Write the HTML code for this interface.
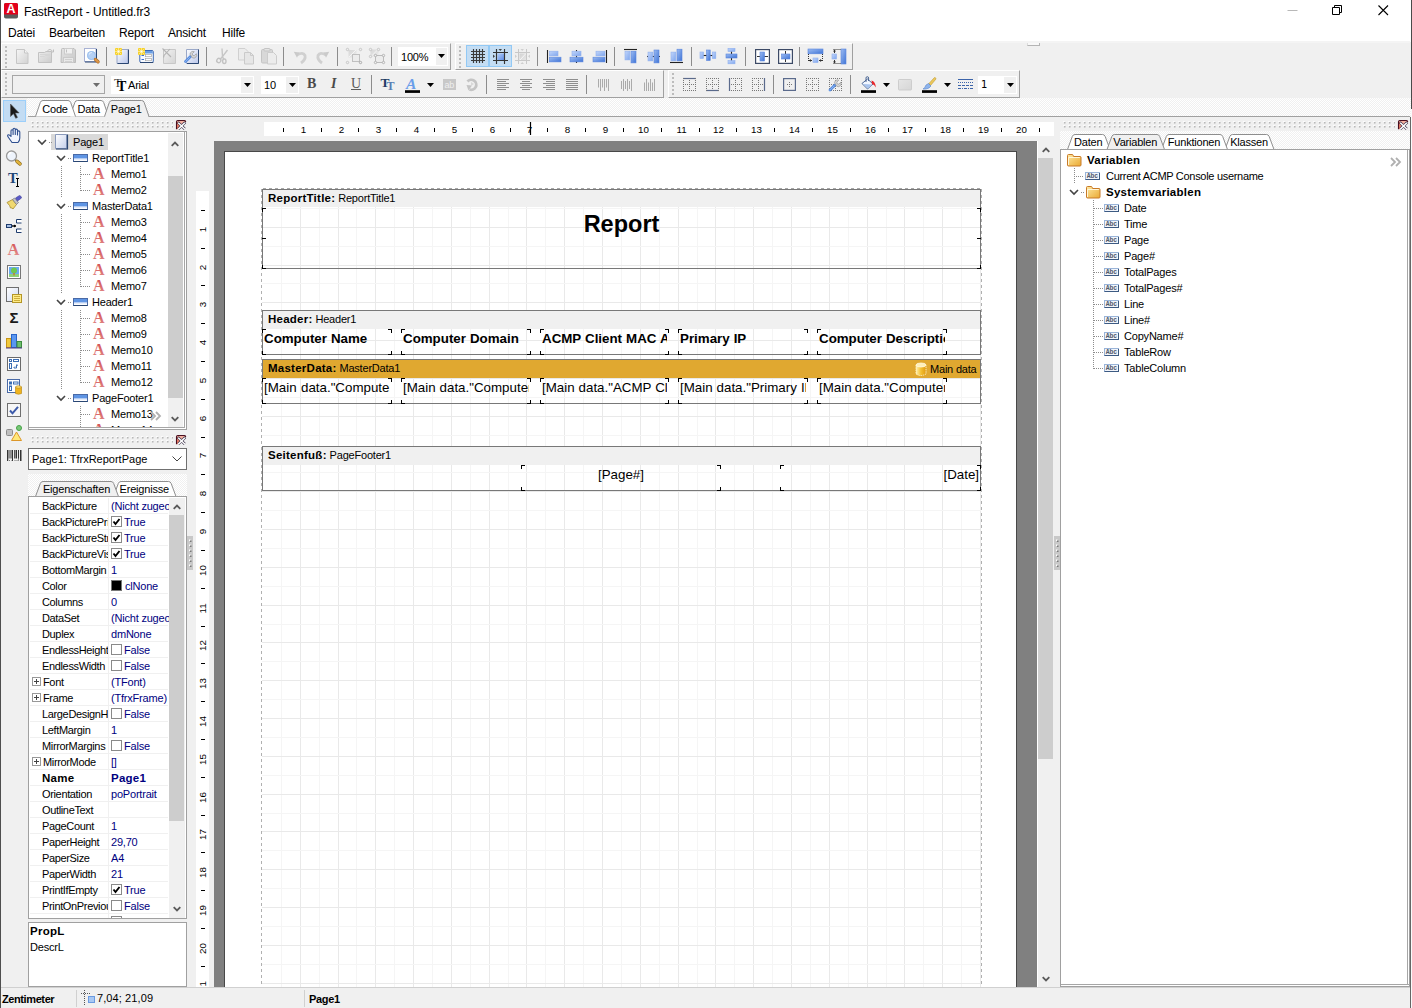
<!DOCTYPE html><html><head><meta charset="utf-8"><title>FastReport - Untitled.fr3</title><style>
*{box-sizing:border-box;margin:0;padding:0}
html,body{width:1412px;height:1008px;overflow:hidden;background:#f0f0f0}
body{font-family:"Liberation Sans",sans-serif;font-size:11px;color:#000;position:relative;letter-spacing:-0.2px}
.a{position:absolute}
.t{position:absolute;white-space:nowrap;line-height:14px;height:14px}
.b{font-weight:bold;font-size:11.5px;letter-spacing:0.25px}
.nv{color:#000080}
svg{position:absolute;overflow:visible}
.grip{position:absolute;height:8px;background-image:linear-gradient(90deg,#b4b4b4 0 2px,transparent 2px),linear-gradient(90deg,#fff 0 2px,transparent 2px);background-size:5px 2px,5px 2px;background-repeat:repeat-x;background-position:0 1px,-1px 0;}
.tbar{position:absolute;border-right:1px solid #a0a0a0;border-bottom:1px solid #a0a0a0;border-top:1px solid #fff;border-left:1px solid #fff}
.sep{position:absolute;width:1px;background:#8c8c8c}
.vg{position:absolute;width:3px;background-image:linear-gradient(135deg,#fff 0 35%,#b4b4b4 35% 100%);background-size:2px 2px;background-repeat:repeat-y;background-size:2px 4px;background-image:linear-gradient(180deg,#bcbcbc 0 2px,transparent 2px 4px);width:2px}
.mm{position:absolute}
.mm i{position:absolute;width:4px;height:4px;border:0 solid #000}
.mm i.tl{left:0;top:0;border-left-width:1px;border-top-width:1px}
.mm i.tr{right:0;top:0;border-right-width:1px;border-top-width:1px}
.mm i.bl{left:0;bottom:0;border-left-width:1px;border-bottom-width:1px}
.mm i.br{right:0;bottom:0;border-right-width:1px;border-bottom-width:1px}
.mt{position:absolute;left:2px;right:2px;top:1.5px;overflow:hidden;white-space:nowrap;font-size:13.33px;line-height:16px;height:18px;letter-spacing:0;word-spacing:0.3px}
.hatch{background-image:conic-gradient(#fff 25%,#f0f0f0 0 50%,#fff 0 75%,#f0f0f0 0);background-size:2px 2px}
.cb{position:absolute;width:11px;height:11px;border:1px solid #8a8a8a;background:#fff}
</style></head><body>
<div class="a" style="left:0px;top:0px;width:1412px;height:42px;background:#fff"></div>
<svg style="left:4px;top:3px" width="15" height="16" viewBox="0 0 15 16"><rect x="0" y="0" width="14" height="15.500" rx="1.800" fill="#5c5c5c"/><path d="M0 1.800Q0 0 1.800 0H12.200Q14 0 14 1.800V11.500H0Z" fill="#e2001a"/><text x="7" y="10.400" text-anchor="middle" font-family="Liberation Sans,sans-serif" font-weight="bold" font-size="12.500" fill="#fff" letter-spacing="0">A</text></svg>
<div class="t " style="left:24px;top:4px;font-size:12px;line-height:16px;height:16px;top:4px;letter-spacing:-0.08px">FastReport - Untitled.fr3</div>
<svg style="left:1280px;top:0" width="132" height="22" viewBox="0 0 132 22"><path d="M7.5 10.5h10" stroke="#b8b8b8" fill="none"/><path d="M52.5 7.5h7v7h-7zM54.5 7.5v-2h7v7h-2" stroke="#000" fill="none"/><path d="M98.5 5.500l9.500 9.500M108 5.5l-9.500 9.500" stroke="#000" stroke-width="1.1" fill="none"/></svg>
<div class="t " style="left:8px;top:26px;font-size:12px;line-height:16px;height:16px;top:25px">Datei</div>
<div class="t " style="left:49px;top:26px;font-size:12px;line-height:16px;height:16px;top:25px">Bearbeiten</div>
<div class="t " style="left:119px;top:26px;font-size:12px;line-height:16px;height:16px;top:25px">Report</div>
<div class="t " style="left:168px;top:26px;font-size:12px;line-height:16px;height:16px;top:25px">Ansicht</div>
<div class="t " style="left:222px;top:26px;font-size:12px;line-height:16px;height:16px;top:25px">Hilfe</div>
<div class="a" style="left:1px;top:41px;width:1409px;height:2px;background:#f4f4f4"></div>
<div class="tbar" style="left:1px;top:43px;width:450px;height:27px"></div>
<div class="tbar" style="left:455px;top:43px;width:398px;height:27px"></div>
<div class="tbar" style="left:1px;top:70px;width:663px;height:28px"></div>
<div class="tbar" style="left:668px;top:70px;width:352px;height:28px"></div>
<div class="vg" style="left:5px;top:46px;height:22px"></div>
<div class="vg" style="left:459px;top:46px;height:22px"></div>
<div class="vg" style="left:5px;top:73px;height:22px"></div>
<div class="vg" style="left:672px;top:73px;height:22px"></div>
<svg style="left:15px;top:48px" width="16" height="16" viewBox="0 0 16 16"><defs><linearGradient id="g1" x1="0" y1="0" x2="1" y2="1"><stop offset="0" stop-color="#f6f6f6"/><stop offset="1" stop-color="#d2d2d2"/></linearGradient></defs><path d="M1.500 1.500h8l3.500 3.500v10.500h-11.500z" fill="url(#g1)" stroke="#c6c6c6"/><path d="M9.500 1.500v3.500h3.500" fill="#f4f4f4" stroke="#c6c6c6"/></svg>
<svg style="left:38px;top:48px" width="16" height="16" viewBox="0 0 16 16"><defs><linearGradient id="g2" x1="0" y1="0" x2="1" y2="1"><stop offset="0" stop-color="#ececec"/><stop offset="1" stop-color="#cccccc"/></linearGradient></defs><path d="M0.500 4.500h6l1.500-1h5.500v11h-13z" fill="url(#g2)" stroke="#c2c2c2"/><path d="M2 6.500h10M2 8.500h4.500l1-1h4.500" stroke="#d6d6d6" fill="none"/><path d="M9.500 2.500q2.500-2.500 5 0.500M15.500 1.500v2.500h-2.500" fill="none" stroke="#c0c0c0"/></svg>
<svg style="left:61px;top:48px" width="16" height="16" viewBox="0 0 16 16"><defs><linearGradient id="g3" x1="0" y1="0" x2="1" y2="1"><stop offset="0" stop-color="#e4e4e4"/><stop offset="1" stop-color="#c8c8c8"/></linearGradient></defs><path d="M0.500 1.500a1 1 0 0 1 1-1h11.500l1.500 1.500v12.500h-14.500z" fill="url(#g3)" stroke="#bdbdbd"/><rect x="3.500" y="0.500" width="8" height="5.500" fill="#f0f0f0" stroke="#cccccc"/><rect x="2.500" y="9.500" width="10" height="5" fill="#e8e8e8" stroke="#cacaca"/><path d="M4 11.500h7M4 13.500h7" stroke="#d0d0d0"/><path d="M5.500 1.500v3" stroke="#c0c0c0"/></svg>
<svg style="left:84px;top:48px" width="16" height="16" viewBox="0 0 16 16"><rect x="0.500" y="0.500" width="11.500" height="13" fill="#fff" stroke="#a8b2d4"/><path d="M1 14h11.500V1" stroke="#2a4672" fill="none" stroke-width="1"/><circle cx="7.500" cy="7.500" r="4.500" fill="#b4d0f4"/><circle cx="7.500" cy="7.500" r="4" fill="none" stroke="#9cc0ee" stroke-width="1"/><path d="M5 6.500a3 3 0 0 1 3-2" stroke="#dcebfb" stroke-width="1.200" fill="none"/><path d="M11.500 11.500l2.500 2.300" stroke="#a86a28" stroke-width="3.400" stroke-linecap="round"/><path d="M11.500 11.500l2.500 2.300" stroke="#dc9648" stroke-width="2.200" stroke-linecap="round"/></svg>
<div class="a" style="left:106px;top:47px;width:1px;height:19px;background:#8c8c8c"></div>
<svg style="left:115px;top:48px" width="16" height="16" viewBox="0 0 16 16"><defs><linearGradient id="g4" x1="0" y1="0" x2="1" y2="1"><stop offset="0" stop-color="#ffffff"/><stop offset="1" stop-color="#b9c6ea"/></linearGradient></defs><path d="M2 1.500h11v14h-11z" fill="url(#g4)" stroke="#9aa8c8"/><path d="M2.500 15.500h11v-14" fill="none" stroke="#2a4672" stroke-width="1"/><rect x="0" y="0" width="7" height="7" fill="#f6d12e"/><path d="M0 3.5h7M3.5 0v7M0.5 0.5l6 6M6.5 0.5l-6 6" stroke="#fff6c0" stroke-width="0.600"/><rect x="2.7" y="2.7" width="1.600" height="1.600" fill="#fff"/></svg>
<svg style="left:138px;top:48px" width="16" height="16" viewBox="0 0 16 16"><rect x="1.800" y="2.500" width="13.500" height="12" rx="1.300" fill="#f7faff" stroke="#3c6ab4"/><path d="M2.300 4a1 1 0 0 1 1-1h10.500a1 1 0 0 1 1 1v1.500h-12.500z" fill="#6a9ee4"/><path d="M2 14.500h13.300" stroke="#2a4672"/><path d="M3.500 7.500h2.500M3.500 11.500h2.500" stroke="#3c6ed0" stroke-width="1.200"/><rect x="7.500" y="6.500" width="6" height="2.200" fill="#fff" stroke="#a8a8a8" stroke-width="0.700"/><rect x="7.500" y="10.500" width="6" height="2.200" fill="#fff" stroke="#a8a8a8" stroke-width="0.700"/><rect x="0" y="0" width="7" height="7" fill="#f6d12e"/><path d="M0 3.5h7M3.5 0v7M0.5 0.5l6 6M6.5 0.5l-6 6" stroke="#fff6c0" stroke-width="0.600"/><rect x="2.7" y="2.7" width="1.600" height="1.600" fill="#fff"/></svg>
<svg style="left:161px;top:48px" width="16" height="16" viewBox="0 0 16 16"><defs><linearGradient id="g5" x1="0" y1="0" x2="1" y2="1"><stop offset="0" stop-color="#f2f2f2"/><stop offset="1" stop-color="#d4d4d4"/></linearGradient></defs><path d="M2.500 1.500h12v14h-12z" fill="url(#g5)" stroke="#c8c8c8"/><path d="M1.500 0.500l8.500 8.500M9 1l-6 6.500l-0.500 2" stroke="#b4b4b4" stroke-width="1.100" fill="none"/></svg>
<svg style="left:184px;top:48px" width="16" height="16" viewBox="0 0 16 16"><defs><linearGradient id="g6" x1="0" y1="0" x2="1" y2="1"><stop offset="0" stop-color="#ffffff"/><stop offset="1" stop-color="#b9c6ea"/></linearGradient></defs><path d="M2.500 1.500h12v14h-12z" fill="url(#g6)" stroke="#9aa8c8"/><path d="M3 15.500h11.500v-14" fill="none" stroke="#2a4672" stroke-width="1"/><g transform="translate(0,3)"><path d="M1.500 10.500l5-5" stroke="#5a8ee0" stroke-width="2.800" stroke-linecap="round"/><path d="M1.500 10.500l4-4" stroke="#8ab4f0" stroke-width="1" stroke-linecap="round"/><path d="M6 3.200a3 3 0 0 1 4.300-2.500l-2 2l0.400 1.600l1.600 0.400l2-2a3 3 0 0 1-4 4.100z" fill="#d6d6d6" stroke="#9a9a9a" stroke-width="0.700"/></g></svg>
<div class="a" style="left:206px;top:47px;width:1px;height:19px;background:#8c8c8c"></div>
<svg style="left:215px;top:48px" width="16" height="16" viewBox="0 0 16 16"><path d="M7 0.500l0.500 8l-2.500 3M12.500 2l-5 6.500l1.500 3.500" stroke="#c6c6c6" stroke-width="1.400" fill="none"/><ellipse cx="3.800" cy="12.500" rx="2" ry="2.200" fill="none" stroke="#c2c2c2" stroke-width="1.400" transform="rotate(30 3.800 12.500)"/><ellipse cx="9.300" cy="13.200" rx="1.700" ry="2.300" fill="none" stroke="#c2c2c2" stroke-width="1.400"/></svg>
<svg style="left:238px;top:48px" width="16" height="16" viewBox="0 0 16 16"><path d="M0.500 0.500h6.500l3 3v8.500h-9.500z" fill="#ececec" stroke="#d0d0d0"/><path d="M6.500 4.500h6l3 3v8.500h-9z" fill="#e6e6e6" stroke="#cacaca"/><path d="M12.500 4.500v3h3" fill="none" stroke="#cacaca"/></svg>
<svg style="left:261px;top:48px" width="16" height="16" viewBox="0 0 16 16"><rect x="0.500" y="1.500" width="11" height="13.500" rx="1.200" fill="#d8d8d8" stroke="#c4c4c4"/><rect x="3" y="0.500" width="6" height="2.500" rx="0.800" fill="#e4e4e4" stroke="#c4c4c4"/><path d="M6.500 4.500h6l3 3v8.500h-9z" fill="#ececec" stroke="#cccccc"/></svg>
<div class="a" style="left:283px;top:47px;width:1px;height:19px;background:#8c8c8c"></div>
<svg style="left:292px;top:48px" width="16" height="16" viewBox="0 0 16 16"><path d="M5 7q6-3.500 8 0.500q1 4-4 7.500" fill="none" stroke="#d0d0d0" stroke-width="2.800"/><path d="M1.800 3.800l5.700 0.700l-1 1.800l-1.500 3.500z" fill="#cacaca"/></svg>
<svg style="left:315px;top:48px" width="16" height="16" viewBox="0 0 16 16"><path d="M11 7q-6-3.500-8 0.500q-1 4 4 7.500" fill="none" stroke="#d0d0d0" stroke-width="2.800"/><path d="M14.200 3.800l-5.700 0.700l1 1.800l1.500 3.500z" fill="#cacaca"/></svg>
<div class="a" style="left:337px;top:47px;width:1px;height:19px;background:#8c8c8c"></div>
<svg style="left:346px;top:48px" width="16" height="16" viewBox="0 0 16 16"><defs><linearGradient id="g7" x1="0" y1="0" x2="1" y2="1"><stop offset="0" stop-color="#d6d6d6"/><stop offset="1" stop-color="#ececec"/></linearGradient></defs><rect x="2.500" y="2" width="8" height="7.500" fill="url(#g7)"/><path d="M3 9l7-7" stroke="#f4f4f4"/><rect x="6.500" y="6.500" width="7" height="7" fill="#ececec" stroke="#c0c0c0"/><circle cx="1.5" cy="1.5" r="1.200" fill="#f0f0f0" stroke="#bdbdbd" stroke-width="0.800"/><circle cx="14.5" cy="1.5" r="1.200" fill="#f0f0f0" stroke="#bdbdbd" stroke-width="0.800"/><circle cx="1.5" cy="14.5" r="1.200" fill="#f0f0f0" stroke="#bdbdbd" stroke-width="0.800"/><circle cx="14.5" cy="14.5" r="1.200" fill="#f0f0f0" stroke="#9a9a9a" stroke-width="0.800"/></svg>
<svg style="left:369px;top:48px" width="16" height="16" viewBox="0 0 16 16"><defs><linearGradient id="g8" x1="0" y1="0" x2="1" y2="1"><stop offset="0" stop-color="#d6d6d6"/><stop offset="1" stop-color="#ececec"/></linearGradient></defs><rect x="1.500" y="1.500" width="8" height="7" fill="url(#g8)"/><path d="M2 8.500l7-7" stroke="#f4f4f4"/><rect x="6.500" y="7.500" width="8" height="7" fill="#ececec" stroke="#bcbcbc"/><circle cx="1.5" cy="1.5" r="1.200" fill="#f0f0f0" stroke="#bdbdbd" stroke-width="0.800"/><circle cx="9.5" cy="1.5" r="1.200" fill="#f0f0f0" stroke="#bdbdbd" stroke-width="0.800"/><circle cx="1.5" cy="8.5" r="1.200" fill="#f0f0f0" stroke="#bdbdbd" stroke-width="0.800"/><circle cx="6.5" cy="7.5" r="1.200" fill="#f0f0f0" stroke="#a8a8a8" stroke-width="0.800"/><circle cx="14.5" cy="7.5" r="1.200" fill="#f0f0f0" stroke="#a8a8a8" stroke-width="0.800"/><circle cx="6.5" cy="14.5" r="1.200" fill="#f0f0f0" stroke="#a8a8a8" stroke-width="0.800"/><circle cx="14.5" cy="14.5" r="1.200" fill="#f0f0f0" stroke="#a8a8a8" stroke-width="0.800"/></svg>
<div class="a" style="left:391px;top:47px;width:1px;height:19px;background:#8c8c8c"></div>
<div class="a" style="left:398px;top:47px;width:50px;height:19px;background:#fff"></div>
<div class="t " style="left:401px;top:49.5px;font-size:11px">100%</div>
<div class="a" style="left:436px;top:48px;width:11px;height:17px;background:#f0f0f0"></div>
<svg style="left:438px;top:54px" width="8" height="4" viewBox="0 0 8 4"><path d="M0 0h7l-3.500 4z" fill="#000"/></svg>
<div class="a" style="left:466px;top:45px;width:23px;height:22px;background:#c4ddf3;border:1px solid #92c9f5"></div>
<div class="a" style="left:489px;top:45px;width:23px;height:22px;background:#c4ddf3;border:1px solid #92c9f5"></div>
<svg style="left:470px;top:48px" width="16" height="16" viewBox="0 0 16 16"><path d="M3.500 1v14M6.500 1v14M9.500 1v14M12.500 1v14M1 3.500h14M1 6.500h14M1 9.500h14M1 12.500h14" stroke="#3a3a3a" stroke-width="1.150"/></svg>
<svg style="left:493px;top:48px" width="16" height="16" viewBox="0 0 16 16"><defs><linearGradient id="g9" x1="0" y1="0" x2="1" y2="1"><stop offset="0" stop-color="#b4cdf8"/><stop offset="1" stop-color="#5d8de6"/></linearGradient></defs><rect x="4.500" y="5.500" width="6.500" height="6.500" fill="url(#g9)"/><path d="M3.500 1v15M11.500 1v15M0 4.500h15M0 12.500h15" stroke="#333" stroke-width="1.150"/><path d="M5.500 1h3.500l-1.750 2z" fill="#444"/><path d="M0 6.500v3.500l2-1.750z" fill="#444"/></svg>
<svg style="left:515px;top:48px" width="16" height="16" viewBox="0 0 16 16"><defs><linearGradient id="g10" x1="0" y1="0" x2="1" y2="1"><stop offset="0" stop-color="#d2d2d2"/><stop offset="1" stop-color="#e6e6e6"/></linearGradient></defs><rect x="4.500" y="5.500" width="6.500" height="6.500" fill="url(#g10)"/><path d="M5 12l6-6.500" stroke="#f6f6f6"/><path d="M3.500 1v15M11.500 1v15M0 4.500h15M0 12.500h15" stroke="#c8c8c8" stroke-width="1"/><path d="M5.500 1h3.500l-1.750 2zM5.500 16h3.500l-1.750-2z" fill="#cfcfcf"/><path d="M0 6.500v3.500l2-1.750zM15 6.500v3.500l-2-1.750z" fill="#cfcfcf"/></svg>
<div class="a" style="left:537px;top:47px;width:1px;height:19px;background:#8c8c8c"></div>
<svg style="left:546px;top:48px" width="16" height="16" viewBox="0 0 16 16"><path d="M1.500 2v13" stroke="#222" stroke-width="1.100"/><defs><linearGradient id="g11" x1="0" y1="0" x2="1" y2="1"><stop offset="0" stop-color="#c3d6fa"/><stop offset="1" stop-color="#7ea6ee"/></linearGradient></defs><rect x="3.3" y="3.2" width="8.7" height="4.7" fill="url(#g11)" stroke="#8fb0ee" stroke-width="0.600"/><defs><linearGradient id="g12" x1="0" y1="0" x2="1" y2="1"><stop offset="0" stop-color="#9dbcf2"/><stop offset="1" stop-color="#3f74d6"/></linearGradient></defs><rect x="3.3" y="9.2" width="11.7" height="4.7" fill="url(#g12)" stroke="#5a86de" stroke-width="0.600"/></svg>
<svg style="left:569px;top:48px" width="16" height="16" viewBox="0 0 16 16"><path d="M7.500 2v13" stroke="#222" stroke-width="1.100"/><defs><linearGradient id="g13" x1="0" y1="0" x2="1" y2="1"><stop offset="0" stop-color="#c3d6fa"/><stop offset="1" stop-color="#7ea6ee"/></linearGradient></defs><rect x="3" y="3.2" width="9" height="4.7" fill="url(#g13)" stroke="#8fb0ee" stroke-width="0.600"/><defs><linearGradient id="g14" x1="0" y1="0" x2="1" y2="1"><stop offset="0" stop-color="#9dbcf2"/><stop offset="1" stop-color="#3f74d6"/></linearGradient></defs><rect x="1" y="9.2" width="13" height="4.7" fill="url(#g14)" stroke="#5a86de" stroke-width="0.600"/></svg>
<svg style="left:592px;top:48px" width="16" height="16" viewBox="0 0 16 16"><path d="M14.500 2v13" stroke="#222" stroke-width="1.100"/><defs><linearGradient id="g15" x1="0" y1="0" x2="1" y2="1"><stop offset="0" stop-color="#c3d6fa"/><stop offset="1" stop-color="#7ea6ee"/></linearGradient></defs><rect x="4" y="3.2" width="9" height="4.7" fill="url(#g15)" stroke="#8fb0ee" stroke-width="0.600"/><defs><linearGradient id="g16" x1="0" y1="0" x2="1" y2="1"><stop offset="0" stop-color="#9dbcf2"/><stop offset="1" stop-color="#3f74d6"/></linearGradient></defs><rect x="1" y="9.2" width="12" height="4.7" fill="url(#g16)" stroke="#5a86de" stroke-width="0.600"/></svg>
<div class="a" style="left:614px;top:47px;width:1px;height:19px;background:#8c8c8c"></div>
<svg style="left:623px;top:48px" width="16" height="16" viewBox="0 0 16 16"><path d="M1 1.500h13" stroke="#222" stroke-width="1.100"/><defs><linearGradient id="g17" x1="0" y1="0" x2="1" y2="1"><stop offset="0" stop-color="#c3d6fa"/><stop offset="1" stop-color="#7ea6ee"/></linearGradient></defs><rect x="2" y="3.2" width="4.8" height="8.7" fill="url(#g17)" stroke="#8fb0ee" stroke-width="0.600"/><defs><linearGradient id="g18" x1="0" y1="0" x2="1" y2="1"><stop offset="0" stop-color="#9dbcf2"/><stop offset="1" stop-color="#3f74d6"/></linearGradient></defs><rect x="8" y="3.2" width="5" height="11.7" fill="url(#g18)" stroke="#5a86de" stroke-width="0.600"/></svg>
<svg style="left:646px;top:48px" width="16" height="16" viewBox="0 0 16 16"><path d="M1 8.500h13" stroke="#222" stroke-width="1.100"/><defs><linearGradient id="g19" x1="0" y1="0" x2="1" y2="1"><stop offset="0" stop-color="#c3d6fa"/><stop offset="1" stop-color="#7ea6ee"/></linearGradient></defs><rect x="2" y="4.1" width="4.8" height="8.8" fill="url(#g19)" stroke="#8fb0ee" stroke-width="0.600"/><defs><linearGradient id="g20" x1="0" y1="0" x2="1" y2="1"><stop offset="0" stop-color="#9dbcf2"/><stop offset="1" stop-color="#3f74d6"/></linearGradient></defs><rect x="8" y="2" width="5" height="12.9" fill="url(#g20)" stroke="#5a86de" stroke-width="0.600"/></svg>
<svg style="left:669px;top:48px" width="16" height="16" viewBox="0 0 16 16"><path d="M1 14.500h13" stroke="#222" stroke-width="1.100"/><defs><linearGradient id="g21" x1="0" y1="0" x2="1" y2="1"><stop offset="0" stop-color="#c3d6fa"/><stop offset="1" stop-color="#7ea6ee"/></linearGradient></defs><rect x="2" y="4.1" width="4.8" height="8.8" fill="url(#g21)" stroke="#8fb0ee" stroke-width="0.600"/><defs><linearGradient id="g22" x1="0" y1="0" x2="1" y2="1"><stop offset="0" stop-color="#9dbcf2"/><stop offset="1" stop-color="#3f74d6"/></linearGradient></defs><rect x="8" y="1.2" width="5" height="11.7" fill="url(#g22)" stroke="#5a86de" stroke-width="0.600"/></svg>
<div class="a" style="left:691px;top:47px;width:1px;height:19px;background:#8c8c8c"></div>
<svg style="left:700px;top:48px" width="16" height="16" viewBox="0 0 16 16"><path d="M3 7.500h10" stroke="#222" stroke-width="1.100"/><defs><linearGradient id="g23" x1="0" y1="0" x2="1" y2="1"><stop offset="0" stop-color="#c3d6fa"/><stop offset="1" stop-color="#7ea6ee"/></linearGradient></defs><rect x="0" y="4" width="3.5" height="6.5" fill="url(#g23)" stroke="#8fb0ee" stroke-width="0.600"/><defs><linearGradient id="g24" x1="0" y1="0" x2="1" y2="1"><stop offset="0" stop-color="#9dbcf2"/><stop offset="1" stop-color="#3f74d6"/></linearGradient></defs><rect x="6.5" y="2" width="3.7" height="10.5" fill="url(#g24)" stroke="#5a86de" stroke-width="0.600"/><defs><linearGradient id="g25" x1="0" y1="0" x2="1" y2="1"><stop offset="0" stop-color="#c3d6fa"/><stop offset="1" stop-color="#7ea6ee"/></linearGradient></defs><rect x="12.3" y="4" width="3.5" height="6.5" fill="url(#g25)" stroke="#8fb0ee" stroke-width="0.600"/></svg>
<svg style="left:723px;top:48px" width="16" height="16" viewBox="0 0 16 16"><path d="M8.500 3v10" stroke="#222" stroke-width="1.100"/><defs><linearGradient id="g26" x1="0" y1="0" x2="1" y2="1"><stop offset="0" stop-color="#c3d6fa"/><stop offset="1" stop-color="#7ea6ee"/></linearGradient></defs><rect x="5" y="0.3" width="7" height="3.2" fill="url(#g26)" stroke="#8fb0ee" stroke-width="0.600"/><defs><linearGradient id="g27" x1="0" y1="0" x2="1" y2="1"><stop offset="0" stop-color="#9dbcf2"/><stop offset="1" stop-color="#3f74d6"/></linearGradient></defs><rect x="3" y="6" width="11" height="4" fill="url(#g27)" stroke="#5a86de" stroke-width="0.600"/><defs><linearGradient id="g28" x1="0" y1="0" x2="1" y2="1"><stop offset="0" stop-color="#c3d6fa"/><stop offset="1" stop-color="#7ea6ee"/></linearGradient></defs><rect x="5" y="12.5" width="7" height="3.3" fill="url(#g28)" stroke="#8fb0ee" stroke-width="0.600"/></svg>
<div class="a" style="left:745px;top:47px;width:1px;height:19px;background:#8c8c8c"></div>
<svg style="left:754px;top:48px" width="16" height="16" viewBox="0 0 16 16"><rect x="1.600" y="1.600" width="13.800" height="13.800" fill="#fff" stroke="#3c4a66" stroke-width="1.200"/><path d="M3 8.500h11" stroke="#333"/><defs><linearGradient id="g29" x1="0" y1="0" x2="1" y2="1"><stop offset="0" stop-color="#9dbcf2"/><stop offset="1" stop-color="#3f74d6"/></linearGradient></defs><rect x="6" y="4" width="4.5" height="9" fill="url(#g29)" stroke="#5a86de" stroke-width="0.600"/></svg>
<svg style="left:777px;top:48px" width="16" height="16" viewBox="0 0 16 16"><rect x="1.600" y="1.600" width="13.800" height="13.800" fill="#fff" stroke="#3c4a66" stroke-width="1.200"/><path d="M8.500 3v11" stroke="#333"/><defs><linearGradient id="g30" x1="0" y1="0" x2="1" y2="1"><stop offset="0" stop-color="#9dbcf2"/><stop offset="1" stop-color="#3f74d6"/></linearGradient></defs><rect x="4.5" y="6" width="8.5" height="5" fill="url(#g30)" stroke="#5a86de" stroke-width="0.600"/></svg>
<div class="a" style="left:799px;top:47px;width:1px;height:19px;background:#8c8c8c"></div>
<svg style="left:807px;top:48px" width="16" height="16" viewBox="0 0 16 16"><defs><linearGradient id="g31" x1="0" y1="0" x2="1" y2="1"><stop offset="0" stop-color="#9dbcf2"/><stop offset="1" stop-color="#3f74d6"/></linearGradient></defs><rect x="1" y="1" width="15" height="4.8" fill="url(#g31)" stroke="#5a86de" stroke-width="0.600"/><defs><linearGradient id="g32" x1="0" y1="0" x2="1" y2="1"><stop offset="0" stop-color="#c3d6fa"/><stop offset="1" stop-color="#7ea6ee"/></linearGradient></defs><rect x="6" y="10" width="5" height="4.5" fill="url(#g32)" stroke="#8fb0ee" stroke-width="0.600"/><path d="M1.500 6v8M15.500 6v8" stroke="#333" stroke-dasharray="1 1" fill="none"/><path d="M2 12.500h3M15 12.500h-3" stroke="#333"/><path d="M2 12.500l1.800-1.500v3zM15 12.500l-1.800-1.500v3z" fill="#333"/></svg>
<svg style="left:831px;top:48px" width="16" height="16" viewBox="0 0 16 16"><defs><linearGradient id="g33" x1="0" y1="0" x2="1" y2="1"><stop offset="0" stop-color="#9dbcf2"/><stop offset="1" stop-color="#3f74d6"/></linearGradient></defs><rect x="10" y="1" width="5" height="15" fill="url(#g33)" stroke="#5a86de" stroke-width="0.600"/><defs><linearGradient id="g34" x1="0" y1="0" x2="1" y2="1"><stop offset="0" stop-color="#c3d6fa"/><stop offset="1" stop-color="#7ea6ee"/></linearGradient></defs><rect x="1" y="6" width="4.5" height="5" fill="url(#g34)" stroke="#8fb0ee" stroke-width="0.600"/><path d="M9.500 1.500h-7M9.500 15.500h-7" stroke="#333" stroke-dasharray="1 1" fill="none"/><path d="M3.500 2v3M3.500 15v-3" stroke="#333"/><path d="M3.500 1.500l-1.500 2h3zM3.500 15.500l-1.500-2h3z" fill="#333"/></svg>
<div class="a" style="left:12px;top:75px;width:93px;height:19px;border:1px solid #a6a6a6;background:#f0f0f0"></div>
<svg style="left:93px;top:83px" width="8" height="4" viewBox="0 0 8 4"><path d="M0 0h7l-3.500 4z" fill="#6d6d6d"/></svg>
<div class="a" style="left:111px;top:76px;width:143px;height:18px;background:#fff"></div>
<svg style="left:114px;top:77px" width="16" height="14" viewBox="0 0 16 14"><text x="0" y="9.500" font-family="Liberation Serif,serif" font-size="12.500" fill="#444">T</text><text x="3" y="13.800" font-family="Liberation Serif,serif" font-weight="bold" font-size="14" fill="#000">T</text></svg>
<div class="t " style="left:128px;top:78px;">Arial</div>
<div class="a" style="left:241px;top:77px;width:12px;height:16px;background:#f0f0f0"></div>
<svg style="left:244px;top:83px" width="8" height="4" viewBox="0 0 8 4"><path d="M0 0h7l-3.500 4z" fill="#000"/></svg>
<div class="a" style="left:261px;top:76px;width:38px;height:18px;background:#fff"></div>
<div class="t " style="left:264px;top:78px;">10</div>
<div class="a" style="left:286px;top:77px;width:12px;height:16px;background:#f0f0f0"></div>
<svg style="left:289px;top:83px" width="8" height="4" viewBox="0 0 8 4"><path d="M0 0h7l-3.500 4z" fill="#000"/></svg>
<div class="t" style="left:307px;top:75px;font-family:'Liberation Serif',serif;font-weight:bold;font-size:14px;line-height:18px;height:18px;color:#4a4a4a">B</div>
<div class="t" style="left:331px;top:75px;font-family:'Liberation Serif',serif;font-style:italic;font-weight:bold;font-size:14px;line-height:18px;height:18px;color:#4a4a4a">I</div>
<div class="t" style="left:351px;top:75px;font-family:'Liberation Serif',serif;font-size:14px;line-height:18px;height:18px;color:#5a5a5a;text-decoration:underline">U</div>
<div class="a" style="left:371px;top:75px;width:1px;height:19px;background:#8c8c8c"></div>
<svg style="left:379px;top:76px" width="16" height="16" viewBox="0 0 16 16"><text x="1.500" y="11" font-family="Liberation Serif,serif" font-weight="bold" font-size="13.500" fill="#1e3c64">T</text><text x="7.500" y="13.500" font-family="Liberation Serif,serif" font-weight="bold" font-size="12" fill="#5a7eb4">T</text></svg>
<svg style="left:404px;top:76px" width="16" height="16" viewBox="0 0 16 16"><text x="2" y="12.500" font-family="Liberation Serif,serif" font-weight="bold" font-style="italic" font-size="15.500" fill="#6a9eea">A</text><rect x="1" y="14.200" width="15" height="2.700" fill="#000"/></svg>
<svg style="left:427px;top:83px" width="8" height="4" viewBox="0 0 8 4"><path d="M0 0h7l-3.500 4z" fill="#000"/></svg>
<svg style="left:441px;top:76px" width="16" height="16" viewBox="0 0 16 16"><rect x="2" y="3" width="13" height="11" fill="#c8c8c8"/><text x="3.500" y="11.500" font-size="9" font-family="Liberation Sans,sans-serif" fill="#efefef">ab</text></svg>
<svg style="left:464px;top:76px" width="16" height="16" viewBox="0 0 16 16"><path d="M3.500 5.500a5 5 0 1 1 2 8" fill="none" stroke="#c4c4c4" stroke-width="2.800"/><path d="M2.500 9l5.500 0.500l-3.500 5z" fill="#c4c4c4"/><path d="M7 6l3 2l-3 2z" fill="#d8d8d8"/></svg>
<div class="a" style="left:486px;top:75px;width:1px;height:19px;background:#8c8c8c"></div>
<svg style="left:495px;top:76px" width="16" height="16" viewBox="0 0 16 16"><path d="M2 3.5h12" stroke="#8e8e8e"/><path d="M2 5.5h9" stroke="#8e8e8e"/><path d="M2 7.5h12" stroke="#8e8e8e"/><path d="M2 9.5h9" stroke="#8e8e8e"/><path d="M2 11.5h12" stroke="#8e8e8e"/><path d="M2 13.5h9" stroke="#8e8e8e"/></svg>
<svg style="left:518px;top:76px" width="16" height="16" viewBox="0 0 16 16"><path d="M2 3.5h12" stroke="#8e8e8e"/><path d="M4 5.5h8" stroke="#8e8e8e"/><path d="M2 7.5h12" stroke="#8e8e8e"/><path d="M4 9.5h8" stroke="#8e8e8e"/><path d="M2 11.5h12" stroke="#8e8e8e"/><path d="M4 13.5h8" stroke="#8e8e8e"/></svg>
<svg style="left:541px;top:76px" width="16" height="16" viewBox="0 0 16 16"><path d="M2 3.5h12" stroke="#8e8e8e"/><path d="M5 5.5h9" stroke="#8e8e8e"/><path d="M2 7.5h12" stroke="#8e8e8e"/><path d="M5 9.5h9" stroke="#8e8e8e"/><path d="M2 11.5h12" stroke="#8e8e8e"/><path d="M5 13.5h9" stroke="#8e8e8e"/></svg>
<svg style="left:564px;top:76px" width="16" height="16" viewBox="0 0 16 16"><path d="M2 3.5h12" stroke="#8e8e8e"/><path d="M2 5.5h12" stroke="#8e8e8e"/><path d="M2 7.5h12" stroke="#8e8e8e"/><path d="M2 9.5h12" stroke="#8e8e8e"/><path d="M2 11.5h12" stroke="#8e8e8e"/><path d="M2 13.5h12" stroke="#8e8e8e"/></svg>
<div class="a" style="left:586px;top:75px;width:1px;height:19px;background:#8c8c8c"></div>
<svg style="left:596px;top:76px" width="16" height="16" viewBox="0 0 16 16"><path d="M2.5 3v8.5" stroke="#ababab"/><path d="M4.5 3v12" stroke="#ababab"/><path d="M6.5 3v8.5" stroke="#ababab"/><path d="M8.5 3v12" stroke="#ababab"/><path d="M10.5 3v8.5" stroke="#ababab"/><path d="M12.5 3v12" stroke="#ababab"/></svg>
<svg style="left:619px;top:76px" width="16" height="16" viewBox="0 0 16 16"><path d="M2.5 5v8" stroke="#ababab"/><path d="M4.5 3v12" stroke="#ababab"/><path d="M6.5 5v8" stroke="#ababab"/><path d="M8.5 3v12" stroke="#ababab"/><path d="M10.5 5v8" stroke="#ababab"/><path d="M12.5 3v12" stroke="#ababab"/></svg>
<svg style="left:642px;top:76px" width="16" height="16" viewBox="0 0 16 16"><path d="M2.5 6.5v8.5" stroke="#ababab"/><path d="M4.5 3v12" stroke="#ababab"/><path d="M6.5 6.5v8.5" stroke="#ababab"/><path d="M8.5 3v12" stroke="#ababab"/><path d="M10.5 6.5v8.5" stroke="#ababab"/><path d="M12.5 3v12" stroke="#ababab"/></svg>
<svg style="left:681px;top:76px" width="16" height="16" viewBox="0 0 16 16"><path d="M8.500 2v13M2 8.500h13" stroke="#777" stroke-dasharray="1 1" fill="none"/><path d="M2 2.500h13" stroke="#5a6a8c" stroke-width="1.200" fill="none"/><path d="M2 14.500h13" stroke="#777" stroke-dasharray="1 1" fill="none"/><path d="M2.500 2v13" stroke="#777" stroke-dasharray="1 1" fill="none"/><path d="M14.500 2v13" stroke="#777" stroke-dasharray="1 1" fill="none"/></svg>
<svg style="left:704px;top:76px" width="16" height="16" viewBox="0 0 16 16"><path d="M8.500 2v13M2 8.500h13" stroke="#777" stroke-dasharray="1 1" fill="none"/><path d="M2 2.500h13" stroke="#777" stroke-dasharray="1 1" fill="none"/><path d="M2 14.500h13" stroke="#5a6a8c" stroke-width="1.200" fill="none"/><path d="M2.500 2v13" stroke="#777" stroke-dasharray="1 1" fill="none"/><path d="M14.500 2v13" stroke="#777" stroke-dasharray="1 1" fill="none"/></svg>
<svg style="left:727px;top:76px" width="16" height="16" viewBox="0 0 16 16"><path d="M8.500 2v13M2 8.500h13" stroke="#777" stroke-dasharray="1 1" fill="none"/><path d="M2 2.500h13" stroke="#777" stroke-dasharray="1 1" fill="none"/><path d="M2 14.500h13" stroke="#777" stroke-dasharray="1 1" fill="none"/><path d="M2.500 2v13" stroke="#5a6a8c" stroke-width="1.200" fill="none"/><path d="M14.500 2v13" stroke="#777" stroke-dasharray="1 1" fill="none"/></svg>
<svg style="left:750px;top:76px" width="16" height="16" viewBox="0 0 16 16"><path d="M8.500 2v13M2 8.500h13" stroke="#777" stroke-dasharray="1 1" fill="none"/><path d="M2 2.500h13" stroke="#777" stroke-dasharray="1 1" fill="none"/><path d="M2 14.500h13" stroke="#777" stroke-dasharray="1 1" fill="none"/><path d="M2.500 2v13" stroke="#777" stroke-dasharray="1 1" fill="none"/><path d="M14.500 2v13" stroke="#5a6a8c" stroke-width="1.200" fill="none"/></svg>
<div class="a" style="left:773px;top:75px;width:1px;height:19px;background:#8c8c8c"></div>
<svg style="left:781px;top:76px" width="16" height="16" viewBox="0 0 16 16"><rect x="2.600" y="2.600" width="11.800" height="11.800" fill="none" stroke="#5a6a8c" stroke-width="1.200"/><path d="M8.500 6v6M6 8.500h6" stroke="#777" stroke-dasharray="1 1" fill="none"/></svg>
<svg style="left:804px;top:76px" width="16" height="16" viewBox="0 0 16 16"><path d="M8.500 2v13M2 8.500h13" stroke="#777" stroke-dasharray="1 1" fill="none"/><path d="M2 2.500h13" stroke="#777" stroke-dasharray="1 1" fill="none"/><path d="M2 14.500h13" stroke="#777" stroke-dasharray="1 1" fill="none"/><path d="M2.500 2v13" stroke="#777" stroke-dasharray="1 1" fill="none"/><path d="M14.500 2v13" stroke="#777" stroke-dasharray="1 1" fill="none"/></svg>
<svg style="left:827px;top:76px" width="16" height="16" viewBox="0 0 16 16"><path d="M8.500 2v13M2 8.500h13" stroke="#777" stroke-dasharray="1 1" fill="none"/><path d="M2 2.500h13" stroke="#777" stroke-dasharray="1 1" fill="none"/><path d="M2 14.500h13" stroke="#777" stroke-dasharray="1 1" fill="none"/><path d="M2.500 2v13" stroke="#777" stroke-dasharray="1 1" fill="none"/><path d="M14.500 2v13" stroke="#777" stroke-dasharray="1 1" fill="none"/><g transform="translate(1.5,3.5)"><path d="M1.500 10.500l5-5" stroke="#5a8ee0" stroke-width="2.800" stroke-linecap="round"/><path d="M1.500 10.500l4-4" stroke="#8ab4f0" stroke-width="1" stroke-linecap="round"/><path d="M6 3.200a3 3 0 0 1 4.300-2.500l-2 2l0.400 1.600l1.600 0.400l2-2a3 3 0 0 1-4 4.100z" fill="#d6d6d6" stroke="#9a9a9a" stroke-width="0.700"/></g></svg>
<div class="a" style="left:850px;top:75px;width:1px;height:19px;background:#8c8c8c"></div>
<svg style="left:860px;top:76px" width="16" height="16" viewBox="0 0 16 16"><path d="M2 7.500l5.500-4.500l5.500 5l-5.500 5z" fill="#f2f7ff" stroke="#3c5a8c" stroke-width="0.900"/><path d="M3 8l5 4.500l4.500-4z" fill="#a9c4ee"/><path d="M6 6v-4a1.300 1.300 0 0 1 2.600 0v3" fill="none" stroke="#3c5a8c" stroke-width="0.900"/><path d="M11.500 4.500q4 1 4.300 7q-1.800-3.500-3.800-3.200z" fill="#e8262a"/><rect x="1" y="14.200" width="15" height="2.700" fill="#000"/></svg>
<svg style="left:883px;top:83px" width="8" height="4" viewBox="0 0 8 4"><path d="M0 0h7l-3.500 4z" fill="#000"/></svg>
<svg style="left:897px;top:76px" width="16" height="16" viewBox="0 0 16 16"><defs><linearGradient id="g35" x1="0" y1="0" x2="1" y2="1"><stop offset="0" stop-color="#e6e6e6"/><stop offset="1" stop-color="#d6d6d6"/></linearGradient></defs><rect x="1.500" y="3.500" width="13" height="10.500" rx="0.800" fill="url(#g35)" stroke="#cdcdcd"/></svg>
<svg style="left:921px;top:76px" width="16" height="16" viewBox="0 0 16 16"><path d="M7.500 8l6-6.500q1.500 0 1.500 1.500l-5.500 6.500z" fill="#ecc85a" stroke="#c09a32" stroke-width="0.600"/><path d="M2 13q2-1 3-4l2.500-1.500l2.500 2.500l-2 2q-3 1.500-6 1z" fill="#8eb4ec" stroke="#5a86cc" stroke-width="0.600"/><rect x="1" y="14.200" width="15" height="2.700" fill="#000"/></svg>
<svg style="left:944px;top:83px" width="8" height="4" viewBox="0 0 8 4"><path d="M0 0h7l-3.500 4z" fill="#000"/></svg>
<svg style="left:957px;top:76px" width="16" height="16" viewBox="0 0 16 16"><path d="M1 3.500h15" stroke="#3c64aa"/><path d="M1 6.500h15" stroke="#3c64aa" stroke-dasharray="1 1"/><path d="M1 9.500h15" stroke="#3c64aa" stroke-dasharray="3 1"/><path d="M1 12.500h15" stroke="#3c64aa" stroke-dasharray="3 1 1 1"/></svg>
<div class="a" style="left:978px;top:76px;width:39px;height:18px;background:#fff"></div>
<div class="t" style="left:981px;top:78px;font-family:'DejaVu Sans',sans-serif;font-size:10px;line-height:14px;height:14px">1</div>
<div class="a" style="left:1004px;top:77px;width:12px;height:16px;background:#f0f0f0"></div>
<svg style="left:1007px;top:83px" width="8" height="4" viewBox="0 0 8 4"><path d="M0 0h7l-3.500 4z" fill="#000"/></svg>
<div class="a" style="left:1027px;top:43px;width:13px;height:3px;background:#f8f8f8;border-bottom:1px solid #b4b4b4;border-right:1px solid #b4b4b4;border-left:1px solid #dcdcdc"></div>
<div class="a hatch" style="left:27px;top:98px;width:1384px;height:18px"></div>
<div class="a" style="left:28px;top:116px;width:1382px;height:1px;background:#a0a0a0"></div>
<svg style="left:33px;top:100px" width="117.5" height="17" viewBox="0 0 117.5 17"><path d="M37.0 16.5L41.8 2.500Q42.5 0.500 44.5 0.500H68.0Q70.0 0.500 70.7 2.500L75.5 16.5" fill="#fff" stroke="#8e8e8e"/><path d="M2.5 16.5L7.3 2.500Q8.0 0.500 10.0 0.500H35.0Q37.0 0.500 37.7 2.500L42.5 16.5" fill="#fff" stroke="#8e8e8e"/><path d="M71.5 16.5L76.3 2.500Q77.0 0.500 79.0 0.500H108.5Q110.5 0.500 111.2 2.500L116.0 16.5" fill="#f0f0f0" stroke="#8e8e8e"/><path d="M72.5 16.5H115.0" stroke="#f0f0f0"/></svg>
<div class="t" style="left:35px;width:40px;text-align:center;top:102px;font-size:11px">Code</div>
<div class="t" style="left:69.5px;width:38.5px;text-align:center;top:102px;font-size:11px">Data</div>
<div class="t" style="left:104px;width:44.5px;text-align:center;top:102px;font-size:11px">Page1</div>
<div class="a" style="left:3px;top:100px;width:23px;height:22px;background:#c3dcf3;border:1px solid #9ccffa"></div>
<svg style="left:6px;top:103px" width="16" height="16" viewBox="0 0 16 16"><path d="M4.500 1v12.500l3-2.800l2.200 4.600l1.800-0.900l-2.200-4.500h3.800z" fill="#1a1a1a" stroke="#555" stroke-width="0.600"/></svg>
<svg style="left:6px;top:127px" width="16" height="16" viewBox="0 0 16 16"><path d="M6 15.500L2.500 10.500Q0.800 8.300 2.300 7.800Q3.500 7.600 5 9.500V4Q5 2.800 6 2.800Q7.100 2.800 7.100 4V7.500V2.500Q7.100 1.300 8.200 1.300Q9.300 1.300 9.300 2.500V7.500V3.300Q9.300 2.100 10.400 2.100Q11.500 2.100 11.500 3.300V8V5Q11.500 3.900 12.600 3.900Q13.800 3.900 13.800 5V11Q13.800 13.500 12 15.500Z" fill="#f2f5fd" stroke="#2f4f8f" stroke-width="1.100" stroke-linejoin="round"/></svg>
<svg style="left:6px;top:150px" width="16" height="16" viewBox="0 0 16 16"><circle cx="5.500" cy="6" r="5" fill="#eef4fd" stroke="#9a9a9a" stroke-width="1.300"/><path d="M2.500 5.500a3.300 3.300 0 0 1 3-3" stroke="#fff" stroke-width="1.300" fill="none"/><path d="M9.300 9.800l1.500 1.300" stroke="#7a7a7a" stroke-width="1.600"/><path d="M11 11.300l3 2.600" stroke="#8a6a1e" stroke-width="3.600" stroke-linecap="round"/><path d="M11 11.300l3 2.600" stroke="#e2b43c" stroke-width="2.400" stroke-linecap="round"/></svg>
<svg style="left:6px;top:172px" width="16" height="16" viewBox="0 0 16 16"><text x="2" y="10.800" font-family="Liberation Serif,serif" font-weight="bold" font-size="14.500" fill="#1e4678">T</text><path d="M11.500 6.500v8M10 6.500h3M10 14.500h3" stroke="#000" fill="none"/></svg>
<svg style="left:6px;top:195px" width="16" height="16" viewBox="0 0 16 16"><path d="M1 7.500l5.500-3l4 5l-3.500 4.500q-1-1.500-2.500-1q0-2-3.500-5.500z" fill="#f0d870" stroke="#a88c28" stroke-width="0.800"/><path d="M6.500 4.500l2-1.500l4 4.500l-2 2z" fill="#c0c0c8" stroke="#777" stroke-width="0.700"/><path d="M9.500 3l4-2.500q2 0.500 2 2.500l-4 3z" fill="#5a5ac8" stroke="#3c3c96" stroke-width="0.600"/></svg>
<svg style="left:6px;top:218px" width="16" height="16" viewBox="0 0 16 16"><rect x="0.500" y="6.500" width="5" height="3" fill="#a8c0e4" stroke="#1e3c6e"/><path d="M6 8h4" stroke="#000" stroke-width="1.400"/><path d="M8 6.500l2.200 1.500l-2.200 1.500z" fill="#000"/><path d="M15.500 1.500h-5v3.500h5M15.500 11h-5v3.500h5" fill="#fff" stroke="#1e3c6e"/></svg>
<svg style="left:6px;top:241px" width="16" height="16" viewBox="0 0 16 16"><defs><linearGradient id="g36" x1="0" y1="0" x2="0" y2="1"><stop offset="0" stop-color="#d04646"/><stop offset="1" stop-color="#e69a9a"/></linearGradient></defs><text x="1.500" y="13.500" font-family="Liberation Serif,serif" font-weight="bold" font-size="16.500" fill="url(#g36)">A</text></svg>
<svg style="left:6px;top:264px" width="16" height="16" viewBox="0 0 16 16"><rect x="1.500" y="1.500" width="13" height="13" fill="#fff" stroke="#767676"/><rect x="3" y="3" width="10" height="10" fill="#6aaaf2"/><rect x="3" y="10" width="10" height="3" fill="#8ed07a"/><circle cx="8" cy="6.500" r="3" fill="#6ec850"/><path d="M7.300 9h1.400v2.500h-1.400z" fill="#c87828"/></svg>
<svg style="left:6px;top:287px" width="16" height="16" viewBox="0 0 16 16"><defs><linearGradient id="g37" x1="0" y1="0" x2="1" y2="1"><stop offset="0" stop-color="#ffffff"/><stop offset="1" stop-color="#d0daf0"/></linearGradient></defs><rect x="0.500" y="0.500" width="12" height="14" fill="url(#g37)" stroke="#6e6e6e"/><rect x="6.500" y="7.500" width="9" height="8" fill="#ffec86" stroke="#b49628"/><path d="M8 9.500h6M8 11.500h6M8 13.500h6" stroke="#c8a832" stroke-width="0.900"/></svg>
<svg style="left:6px;top:310px" width="16" height="16" viewBox="0 0 16 16"><text x="8" y="13.300" text-anchor="middle" font-family="Liberation Sans,sans-serif" font-weight="bold" font-size="15" fill="#1a1a1a" letter-spacing="0">Σ</text></svg>
<svg style="left:6px;top:333px" width="16" height="16" viewBox="0 0 16 16"><rect x="0.500" y="5.500" width="4.500" height="9" fill="#f0c83c" stroke="#c89614"/><rect x="5.500" y="1.500" width="5" height="13" fill="#5a96f0" stroke="#2864c8"/><rect x="11" y="8.500" width="4.500" height="6" fill="#6ebe6e" stroke="#3c8c3c"/><path d="M0 15h16" stroke="#503c8c"/></svg>
<svg style="left:6px;top:356px" width="16" height="16" viewBox="0 0 16 16"><rect x="1.500" y="1.500" width="13" height="13" fill="#fff" stroke="#6a6a6a"/><rect x="3.500" y="3.500" width="2" height="2" fill="none" stroke="#3c6eb4"/><rect x="7.500" y="3.500" width="5" height="2" fill="none" stroke="#3c6eb4"/><rect x="3.500" y="7.500" width="2" height="5" fill="none" stroke="#3c6eb4"/><path d="M8 12h2.500v-3M7.500 12l1.500-1.500M10.500 8.500l1.500 1" stroke="#3c6eb4" fill="none"/></svg>
<svg style="left:6px;top:379px" width="16" height="16" viewBox="0 0 16 16"><rect x="1.500" y="0.500" width="12" height="13" fill="#fff" stroke="#4a6aa6"/><rect x="3.500" y="3" width="2" height="2" fill="none" stroke="#3c6eb4"/><rect x="7.500" y="3" width="4.500" height="2" fill="none" stroke="#3c6eb4"/><rect x="3.500" y="7" width="2" height="4.500" fill="none" stroke="#3c6eb4"/><path d="M9.500 8v6.500q3 1.500 6 0v-6.500z" fill="#f0b41e" stroke="#b4820a" stroke-width="0.600"/><ellipse cx="12.500" cy="8" rx="3" ry="1.200" fill="#ffe078" stroke="#b4820a" stroke-width="0.600"/></svg>
<svg style="left:6px;top:402px" width="16" height="16" viewBox="0 0 16 16"><rect x="1.500" y="1.500" width="13" height="13" fill="#f6f6f6" stroke="#6e6e6e"/><path d="M4 8.500l2.500 2.800l5.500-6.500" fill="none" stroke="#3c5aaa" stroke-width="2"/></svg>
<svg style="left:6px;top:425px" width="16" height="16" viewBox="0 0 16 16"><rect x="0.500" y="4.500" width="6" height="6" rx="1" fill="#c0c0c0" stroke="#8c8c8c"/><circle cx="13" cy="3" r="2.500" fill="#78c878" stroke="#46a046"/><path d="M5.500 15.500l5-8.500l5 8.500z" fill="#ffe878" stroke="#dc9628"/></svg>
<svg style="left:6px;top:448px" width="16" height="16" viewBox="0 0 16 16"><rect x="1" y="2" width="1.5" height="11" fill="#333"/><rect x="3.5" y="2" width="1" height="11" fill="#333"/><rect x="5.5" y="2" width="1.5" height="11" fill="#333"/><rect x="8" y="2" width="0.8" height="11" fill="#333"/><rect x="9.5" y="2" width="1.5" height="11" fill="#333"/><rect x="12" y="2" width="1" height="11" fill="#333"/><rect x="14" y="2" width="1.5" height="11" fill="#333"/><rect x="2.500" y="10.500" width="3.500" height="3" fill="#f0f0f0"/><rect x="8" y="10.500" width="4.500" height="3" fill="#f0f0f0"/><path d="M3 12.500h2.500M8.500 12.500h3.500" stroke="#777" stroke-dasharray="1 1"/></svg>
<svg style="left:31px;top:121px" width="142" height="9" viewBox="0 0 142 9"><defs><pattern id="gp1" width="5" height="4" patternUnits="userSpaceOnUse"><rect x="0" y="0" width="2" height="2" fill="#fbfbfb"/><rect x="1" y="1" width="1.500" height="1.500" fill="#b2b2b2"/><rect x="0.500" y="1.500" width="1" height="0.700" fill="#d0d0d0"/></pattern></defs><rect width="142" height="8" fill="url(#gp1)"/></svg>
<svg style="left:176px;top:120px" width="10" height="10" viewBox="0 0 10 10"><path d="M1 1h8.500L5.300 5.500z" fill="#f4b0a0"/><path d="M1 1v8.500L5.300 5.500z" fill="#ea7c64"/><path d="M1.800 2.300l7 6.700M9.300 2.300l-7 6.700" stroke="#3a3048" stroke-width="2.600"/><path d="M2.200 2.700l6.800 6.500M8.900 2.700l-6.600 6.400" stroke="#fff" stroke-width="1.500"/><path d="M0.500 9.300V1.800Q0.500 0.500 1.800 0.500H8.500Q9.700 0.500 9.700 2" fill="none" stroke="#4a0e1e" stroke-width="1.100"/></svg>
<div class="a" style="left:28px;top:131px;width:159px;height:299px;background:#fff;border:1px solid #a0a0a0"></div>
<div class="a" style="left:29px;top:427px;width:156px;height:1px;background:#a6a6a6"></div>
<div class="a" style="left:184px;top:132px;width:1px;height:296px;background:#a6a6a6"></div>
<div class="a" style="left:30px;top:133px;width:154px;height:294px;overflow:hidden">
<div class="a" style="left:21px;top:1px;width:57px;height:16px;background:#d9d9d9"></div>
<svg style="left:7px;top:6px" width="10" height="6" viewBox="0 0 10 6"><path d="M1 1l4 4l4-4" fill="none" stroke="#444" stroke-width="1.600"/></svg>
<div class="a" style="left:19px;top:9px;width:4px;height:1px;background-image:linear-gradient(90deg,#8c8c8c 50%,transparent 50%);background-size:2px 1px"></div>
<svg style="left:24px;top:1px" width="16" height="16" viewBox="0 0 16 16"><defs><linearGradient id="g38" x1="0" y1="0" x2="1" y2="1"><stop offset="0" stop-color="#ffffff"/><stop offset="1" stop-color="#c4d0ec"/></linearGradient></defs><path d="M1.500 0.500h11v14h-11z" fill="url(#g38)" stroke="#8a9abc"/><path d="M2 15h11.500v-14.500" fill="none" stroke="#2a4672" stroke-width="1.200"/></svg>
<div class="t " style="left:43px;top:2px;">Page1</div>
<svg style="left:26px;top:22px" width="10" height="6" viewBox="0 0 10 6"><path d="M1 1l4 4l4-4" fill="none" stroke="#444" stroke-width="1.600"/></svg>
<div class="a" style="left:38px;top:25px;width:4px;height:1px;background-image:linear-gradient(90deg,#8c8c8c 50%,transparent 50%);background-size:2px 1px"></div>
<svg style="left:43px;top:17px" width="16" height="16" viewBox="0 0 16 16"><rect x="0.500" y="4.500" width="14" height="7" fill="#fdfdff" stroke="#4a6aa6"/><rect x="1" y="5" width="13" height="3" fill="#5f95e4"/><path d="M1 8.500h13" stroke="#b4ccf2"/><path d="M1 9.500h13" stroke="#e4ecfa"/><path d="M0.500 11.500h14" stroke="#2a4672"/></svg>
<div class="t " style="left:62px;top:18px;">ReportTitle1</div>
<div class="a" style="left:51px;top:41px;width:10px;height:1px;background-image:linear-gradient(90deg,#8c8c8c 50%,transparent 50%);background-size:2px 1px"></div>
<svg style="left:63px;top:33px" width="14" height="16" viewBox="0 0 14 16"><defs><linearGradient id="g39" x1="0" y1="0" x2="0" y2="1"><stop offset="0" stop-color="#d24a4a"/><stop offset="1" stop-color="#e08a8a"/></linearGradient></defs><text x="0" y="13" font-family="Liberation Serif,serif" font-weight="bold" font-size="16" fill="url(#g39)">A</text></svg>
<div class="t " style="left:81px;top:34px;">Memo1</div>
<div class="a" style="left:51px;top:57px;width:10px;height:1px;background-image:linear-gradient(90deg,#8c8c8c 50%,transparent 50%);background-size:2px 1px"></div>
<svg style="left:63px;top:49px" width="14" height="16" viewBox="0 0 14 16"><defs><linearGradient id="g40" x1="0" y1="0" x2="0" y2="1"><stop offset="0" stop-color="#d24a4a"/><stop offset="1" stop-color="#e08a8a"/></linearGradient></defs><text x="0" y="13" font-family="Liberation Serif,serif" font-weight="bold" font-size="16" fill="url(#g40)">A</text></svg>
<div class="t " style="left:81px;top:50px;">Memo2</div>
<svg style="left:26px;top:70px" width="10" height="6" viewBox="0 0 10 6"><path d="M1 1l4 4l4-4" fill="none" stroke="#444" stroke-width="1.600"/></svg>
<div class="a" style="left:38px;top:73px;width:4px;height:1px;background-image:linear-gradient(90deg,#8c8c8c 50%,transparent 50%);background-size:2px 1px"></div>
<svg style="left:43px;top:65px" width="16" height="16" viewBox="0 0 16 16"><rect x="0.500" y="4.500" width="14" height="7" fill="#fdfdff" stroke="#4a6aa6"/><rect x="1" y="5" width="13" height="3" fill="#5f95e4"/><path d="M1 8.500h13" stroke="#b4ccf2"/><path d="M1 9.500h13" stroke="#e4ecfa"/><path d="M0.500 11.500h14" stroke="#2a4672"/></svg>
<div class="t " style="left:62px;top:66px;">MasterData1</div>
<div class="a" style="left:51px;top:89px;width:10px;height:1px;background-image:linear-gradient(90deg,#8c8c8c 50%,transparent 50%);background-size:2px 1px"></div>
<svg style="left:63px;top:81px" width="14" height="16" viewBox="0 0 14 16"><defs><linearGradient id="g41" x1="0" y1="0" x2="0" y2="1"><stop offset="0" stop-color="#d24a4a"/><stop offset="1" stop-color="#e08a8a"/></linearGradient></defs><text x="0" y="13" font-family="Liberation Serif,serif" font-weight="bold" font-size="16" fill="url(#g41)">A</text></svg>
<div class="t " style="left:81px;top:82px;">Memo3</div>
<div class="a" style="left:51px;top:105px;width:10px;height:1px;background-image:linear-gradient(90deg,#8c8c8c 50%,transparent 50%);background-size:2px 1px"></div>
<svg style="left:63px;top:97px" width="14" height="16" viewBox="0 0 14 16"><defs><linearGradient id="g42" x1="0" y1="0" x2="0" y2="1"><stop offset="0" stop-color="#d24a4a"/><stop offset="1" stop-color="#e08a8a"/></linearGradient></defs><text x="0" y="13" font-family="Liberation Serif,serif" font-weight="bold" font-size="16" fill="url(#g42)">A</text></svg>
<div class="t " style="left:81px;top:98px;">Memo4</div>
<div class="a" style="left:51px;top:121px;width:10px;height:1px;background-image:linear-gradient(90deg,#8c8c8c 50%,transparent 50%);background-size:2px 1px"></div>
<svg style="left:63px;top:113px" width="14" height="16" viewBox="0 0 14 16"><defs><linearGradient id="g43" x1="0" y1="0" x2="0" y2="1"><stop offset="0" stop-color="#d24a4a"/><stop offset="1" stop-color="#e08a8a"/></linearGradient></defs><text x="0" y="13" font-family="Liberation Serif,serif" font-weight="bold" font-size="16" fill="url(#g43)">A</text></svg>
<div class="t " style="left:81px;top:114px;">Memo5</div>
<div class="a" style="left:51px;top:137px;width:10px;height:1px;background-image:linear-gradient(90deg,#8c8c8c 50%,transparent 50%);background-size:2px 1px"></div>
<svg style="left:63px;top:129px" width="14" height="16" viewBox="0 0 14 16"><defs><linearGradient id="g44" x1="0" y1="0" x2="0" y2="1"><stop offset="0" stop-color="#d24a4a"/><stop offset="1" stop-color="#e08a8a"/></linearGradient></defs><text x="0" y="13" font-family="Liberation Serif,serif" font-weight="bold" font-size="16" fill="url(#g44)">A</text></svg>
<div class="t " style="left:81px;top:130px;">Memo6</div>
<div class="a" style="left:51px;top:153px;width:10px;height:1px;background-image:linear-gradient(90deg,#8c8c8c 50%,transparent 50%);background-size:2px 1px"></div>
<svg style="left:63px;top:145px" width="14" height="16" viewBox="0 0 14 16"><defs><linearGradient id="g45" x1="0" y1="0" x2="0" y2="1"><stop offset="0" stop-color="#d24a4a"/><stop offset="1" stop-color="#e08a8a"/></linearGradient></defs><text x="0" y="13" font-family="Liberation Serif,serif" font-weight="bold" font-size="16" fill="url(#g45)">A</text></svg>
<div class="t " style="left:81px;top:146px;">Memo7</div>
<svg style="left:26px;top:166px" width="10" height="6" viewBox="0 0 10 6"><path d="M1 1l4 4l4-4" fill="none" stroke="#444" stroke-width="1.600"/></svg>
<div class="a" style="left:38px;top:169px;width:4px;height:1px;background-image:linear-gradient(90deg,#8c8c8c 50%,transparent 50%);background-size:2px 1px"></div>
<svg style="left:43px;top:161px" width="16" height="16" viewBox="0 0 16 16"><rect x="0.500" y="4.500" width="14" height="7" fill="#fdfdff" stroke="#4a6aa6"/><rect x="1" y="5" width="13" height="3" fill="#5f95e4"/><path d="M1 8.500h13" stroke="#b4ccf2"/><path d="M1 9.500h13" stroke="#e4ecfa"/><path d="M0.500 11.500h14" stroke="#2a4672"/></svg>
<div class="t " style="left:62px;top:162px;">Header1</div>
<div class="a" style="left:51px;top:185px;width:10px;height:1px;background-image:linear-gradient(90deg,#8c8c8c 50%,transparent 50%);background-size:2px 1px"></div>
<svg style="left:63px;top:177px" width="14" height="16" viewBox="0 0 14 16"><defs><linearGradient id="g46" x1="0" y1="0" x2="0" y2="1"><stop offset="0" stop-color="#d24a4a"/><stop offset="1" stop-color="#e08a8a"/></linearGradient></defs><text x="0" y="13" font-family="Liberation Serif,serif" font-weight="bold" font-size="16" fill="url(#g46)">A</text></svg>
<div class="t " style="left:81px;top:178px;">Memo8</div>
<div class="a" style="left:51px;top:201px;width:10px;height:1px;background-image:linear-gradient(90deg,#8c8c8c 50%,transparent 50%);background-size:2px 1px"></div>
<svg style="left:63px;top:193px" width="14" height="16" viewBox="0 0 14 16"><defs><linearGradient id="g47" x1="0" y1="0" x2="0" y2="1"><stop offset="0" stop-color="#d24a4a"/><stop offset="1" stop-color="#e08a8a"/></linearGradient></defs><text x="0" y="13" font-family="Liberation Serif,serif" font-weight="bold" font-size="16" fill="url(#g47)">A</text></svg>
<div class="t " style="left:81px;top:194px;">Memo9</div>
<div class="a" style="left:51px;top:217px;width:10px;height:1px;background-image:linear-gradient(90deg,#8c8c8c 50%,transparent 50%);background-size:2px 1px"></div>
<svg style="left:63px;top:209px" width="14" height="16" viewBox="0 0 14 16"><defs><linearGradient id="g48" x1="0" y1="0" x2="0" y2="1"><stop offset="0" stop-color="#d24a4a"/><stop offset="1" stop-color="#e08a8a"/></linearGradient></defs><text x="0" y="13" font-family="Liberation Serif,serif" font-weight="bold" font-size="16" fill="url(#g48)">A</text></svg>
<div class="t " style="left:81px;top:210px;">Memo10</div>
<div class="a" style="left:51px;top:233px;width:10px;height:1px;background-image:linear-gradient(90deg,#8c8c8c 50%,transparent 50%);background-size:2px 1px"></div>
<svg style="left:63px;top:225px" width="14" height="16" viewBox="0 0 14 16"><defs><linearGradient id="g49" x1="0" y1="0" x2="0" y2="1"><stop offset="0" stop-color="#d24a4a"/><stop offset="1" stop-color="#e08a8a"/></linearGradient></defs><text x="0" y="13" font-family="Liberation Serif,serif" font-weight="bold" font-size="16" fill="url(#g49)">A</text></svg>
<div class="t " style="left:81px;top:226px;">Memo11</div>
<div class="a" style="left:51px;top:249px;width:10px;height:1px;background-image:linear-gradient(90deg,#8c8c8c 50%,transparent 50%);background-size:2px 1px"></div>
<svg style="left:63px;top:241px" width="14" height="16" viewBox="0 0 14 16"><defs><linearGradient id="g50" x1="0" y1="0" x2="0" y2="1"><stop offset="0" stop-color="#d24a4a"/><stop offset="1" stop-color="#e08a8a"/></linearGradient></defs><text x="0" y="13" font-family="Liberation Serif,serif" font-weight="bold" font-size="16" fill="url(#g50)">A</text></svg>
<div class="t " style="left:81px;top:242px;">Memo12</div>
<svg style="left:26px;top:262px" width="10" height="6" viewBox="0 0 10 6"><path d="M1 1l4 4l4-4" fill="none" stroke="#444" stroke-width="1.600"/></svg>
<div class="a" style="left:38px;top:265px;width:4px;height:1px;background-image:linear-gradient(90deg,#8c8c8c 50%,transparent 50%);background-size:2px 1px"></div>
<svg style="left:43px;top:257px" width="16" height="16" viewBox="0 0 16 16"><rect x="0.500" y="4.500" width="14" height="7" fill="#fdfdff" stroke="#4a6aa6"/><rect x="1" y="5" width="13" height="3" fill="#5f95e4"/><path d="M1 8.500h13" stroke="#b4ccf2"/><path d="M1 9.500h13" stroke="#e4ecfa"/><path d="M0.500 11.500h14" stroke="#2a4672"/></svg>
<div class="t " style="left:62px;top:258px;">PageFooter1</div>
<div class="a" style="left:51px;top:281px;width:10px;height:1px;background-image:linear-gradient(90deg,#8c8c8c 50%,transparent 50%);background-size:2px 1px"></div>
<svg style="left:63px;top:273px" width="14" height="16" viewBox="0 0 14 16"><defs><linearGradient id="g51" x1="0" y1="0" x2="0" y2="1"><stop offset="0" stop-color="#d24a4a"/><stop offset="1" stop-color="#e08a8a"/></linearGradient></defs><text x="0" y="13" font-family="Liberation Serif,serif" font-weight="bold" font-size="16" fill="url(#g51)">A</text></svg>
<div class="t " style="left:81px;top:274px;">Memo13</div>
<div class="a" style="left:51px;top:297px;width:10px;height:1px;background-image:linear-gradient(90deg,#8c8c8c 50%,transparent 50%);background-size:2px 1px"></div>
<svg style="left:63px;top:289px" width="14" height="16" viewBox="0 0 14 16"><defs><linearGradient id="g52" x1="0" y1="0" x2="0" y2="1"><stop offset="0" stop-color="#d24a4a"/><stop offset="1" stop-color="#e08a8a"/></linearGradient></defs><text x="0" y="13" font-family="Liberation Serif,serif" font-weight="bold" font-size="16" fill="url(#g52)">A</text></svg>
<div class="t " style="left:81px;top:290px;">Memo14</div>
<div class="a" style="left:31px;top:33px;width:1px;height:32px;background-image:linear-gradient(180deg,#8c8c8c 50%,transparent 50%);background-size:1px 2px"></div>
<div class="a" style="left:31px;top:81px;width:1px;height:80px;background-image:linear-gradient(180deg,#8c8c8c 50%,transparent 50%);background-size:1px 2px"></div>
<div class="a" style="left:31px;top:177px;width:1px;height:80px;background-image:linear-gradient(180deg,#8c8c8c 50%,transparent 50%);background-size:1px 2px"></div>
<div class="a" style="left:50px;top:33px;width:1px;height:25px;background-image:linear-gradient(180deg,#8c8c8c 50%,transparent 50%);background-size:1px 2px"></div>
<div class="a" style="left:50px;top:81px;width:1px;height:73px;background-image:linear-gradient(180deg,#8c8c8c 50%,transparent 50%);background-size:1px 2px"></div>
<div class="a" style="left:50px;top:177px;width:1px;height:73px;background-image:linear-gradient(180deg,#8c8c8c 50%,transparent 50%);background-size:1px 2px"></div>
<div class="a" style="left:50px;top:273px;width:1px;height:24px;background-image:linear-gradient(180deg,#8c8c8c 50%,transparent 50%);background-size:1px 2px"></div>
<div class="a" style="left:138px;top:0px;width:15px;height:295px;background:#f0f0f0"></div>
<div class="a" style="left:138px;top:43px;width:15px;height:222px;background:#cdcdcd"></div>
<svg style="left:141.3px;top:7.5px" width="8" height="6" viewBox="0 0 8 6"><path d="M0.700 4.800l3.300-3.300l3.300 3.300" fill="none" stroke="#5a5a5a" stroke-width="1.800"/></svg>
<svg style="left:141.3px;top:283px" width="8" height="6" viewBox="0 0 8 6"><path d="M0.700 1.200l3.300 3.300l3.300-3.300" fill="none" stroke="#5a5a5a" stroke-width="1.800"/></svg>
<svg style="left:120px;top:278px" width="12" height="10" viewBox="0 0 12 10"><path d="M1 1l4 4l-4 4M6 1l4 4l-4 4" fill="none" stroke="#b0b0b0" stroke-width="1.800"/></svg>
</div>
<svg style="left:31px;top:436px" width="142" height="9" viewBox="0 0 142 9"><defs><pattern id="gp2" width="5" height="4" patternUnits="userSpaceOnUse"><rect x="0" y="0" width="2" height="2" fill="#fbfbfb"/><rect x="1" y="1" width="1.500" height="1.500" fill="#b2b2b2"/><rect x="0.500" y="1.500" width="1" height="0.700" fill="#d0d0d0"/></pattern></defs><rect width="142" height="8" fill="url(#gp2)"/></svg>
<svg style="left:176px;top:435px" width="10" height="10" viewBox="0 0 10 10"><path d="M1 1h8.500L5.300 5.500z" fill="#f4b0a0"/><path d="M1 1v8.500L5.300 5.500z" fill="#ea7c64"/><path d="M1.800 2.300l7 6.700M9.300 2.300l-7 6.700" stroke="#3a3048" stroke-width="2.600"/><path d="M2.200 2.700l6.800 6.500M8.900 2.700l-6.600 6.400" stroke="#fff" stroke-width="1.500"/><path d="M0.500 9.300V1.800Q0.500 0.500 1.800 0.500H8.500Q9.700 0.500 9.700 2" fill="none" stroke="#4a0e1e" stroke-width="1.100"/></svg>
<div class="a" style="left:28px;top:448px;width:159px;height:22px;background:#fff;border:1px solid #707070"></div>
<div class="t " style="left:32px;top:452px;letter-spacing:0">Page1: TfrxReportPage</div>
<svg style="left:172px;top:456px" width="10" height="6" viewBox="0 0 10 6"><path d="M0.500 0.500l4.500 4.500l4.500-4.500" fill="none" stroke="#444" stroke-width="1"/></svg>
<div class="a hatch" style="left:28px;top:474px;width:159px;height:22px"></div>
<svg style="left:33px;top:481px" width="144.5" height="16" viewBox="0 0 144.5 16"><path d="M80.5 15.5L85.3 2.500Q86.0 0.500 88.0 0.500H135.5Q137.5 0.500 138.2 2.500L143.0 15.5" fill="#fff" stroke="#8e8e8e"/><path d="M2.5 15.5L7.3 2.500Q8.0 0.500 10.0 0.500H78.0Q80.0 0.500 80.7 2.500L85.5 15.5" fill="#f0f0f0" stroke="#8e8e8e"/><path d="M3.5 15.5H84.5" stroke="#f0f0f0"/></svg>
<div class="t" style="left:35px;width:83px;text-align:center;top:482px;font-size:11px">Eigenschaften</div>
<div class="t" style="left:113px;width:62.5px;text-align:center;top:482px;font-size:11px">Ereignisse</div>
<div class="a" style="left:28px;top:496px;width:159px;height:423px;background:#fff;border:1px solid #a0a0a0"></div>
<div class="a" style="left:30px;top:498px;width:156px;height:420px;overflow:hidden">
<div class="a" style="left:0px;top:15px;width:138px;height:1px;background:#f0f0f0"></div>
<div class="t " style="left:12px;top:1px;width:66px;overflow:hidden;letter-spacing:-0.35px">BackPicture</div>
<div class="t nv " style="left:81px;top:1px;width:58px;overflow:hidden">(Nicht zugeordnet)</div>
<div class="a" style="left:0px;top:31px;width:138px;height:1px;background:#f0f0f0"></div>
<div class="t " style="left:12px;top:17px;width:66px;overflow:hidden;letter-spacing:-0.35px">BackPicturePrintable</div>
<div class="cb" style="left:81px;top:18px"></div>
<svg style="left:82px;top:19px" width="9" height="9" viewBox="0 0 9 9"><path d="M1.500 4.500l2 2.500l4-5" fill="none" stroke="#000" stroke-width="1.900"/></svg>
<div class="t nv " style="left:94px;top:17px;width:45px;overflow:hidden">True</div>
<div class="a" style="left:0px;top:47px;width:138px;height:1px;background:#f0f0f0"></div>
<div class="t " style="left:12px;top:33px;width:66px;overflow:hidden;letter-spacing:-0.35px">BackPictureStretched</div>
<div class="cb" style="left:81px;top:34px"></div>
<svg style="left:82px;top:35px" width="9" height="9" viewBox="0 0 9 9"><path d="M1.500 4.500l2 2.500l4-5" fill="none" stroke="#000" stroke-width="1.900"/></svg>
<div class="t nv " style="left:94px;top:33px;width:45px;overflow:hidden">True</div>
<div class="a" style="left:0px;top:63px;width:138px;height:1px;background:#f0f0f0"></div>
<div class="t " style="left:12px;top:49px;width:66px;overflow:hidden;letter-spacing:-0.35px">BackPictureVisible</div>
<div class="cb" style="left:81px;top:50px"></div>
<svg style="left:82px;top:51px" width="9" height="9" viewBox="0 0 9 9"><path d="M1.500 4.500l2 2.500l4-5" fill="none" stroke="#000" stroke-width="1.900"/></svg>
<div class="t nv " style="left:94px;top:49px;width:45px;overflow:hidden">True</div>
<div class="a" style="left:0px;top:79px;width:138px;height:1px;background:#f0f0f0"></div>
<div class="t " style="left:12px;top:65px;width:66px;overflow:hidden;letter-spacing:-0.35px">BottomMargin</div>
<div class="t nv " style="left:81px;top:65px;width:58px;overflow:hidden">1</div>
<div class="a" style="left:0px;top:95px;width:138px;height:1px;background:#f0f0f0"></div>
<div class="t " style="left:12px;top:81px;width:66px;overflow:hidden;letter-spacing:-0.35px">Color</div>
<div class="a" style="left:81px;top:82px;width:11px;height:11px;background:#000;border:1px solid #777"></div>
<div class="t nv " style="left:95px;top:81px;width:44px;overflow:hidden">clNone</div>
<div class="a" style="left:0px;top:111px;width:138px;height:1px;background:#f0f0f0"></div>
<div class="t " style="left:12px;top:97px;width:66px;overflow:hidden;letter-spacing:-0.35px">Columns</div>
<div class="t nv " style="left:81px;top:97px;width:58px;overflow:hidden">0</div>
<div class="a" style="left:0px;top:127px;width:138px;height:1px;background:#f0f0f0"></div>
<div class="t " style="left:12px;top:113px;width:66px;overflow:hidden;letter-spacing:-0.35px">DataSet</div>
<div class="t nv " style="left:81px;top:113px;width:58px;overflow:hidden">(Nicht zugeordnet)</div>
<div class="a" style="left:0px;top:143px;width:138px;height:1px;background:#f0f0f0"></div>
<div class="t " style="left:12px;top:129px;width:66px;overflow:hidden;letter-spacing:-0.35px">Duplex</div>
<div class="t nv " style="left:81px;top:129px;width:58px;overflow:hidden">dmNone</div>
<div class="a" style="left:0px;top:159px;width:138px;height:1px;background:#f0f0f0"></div>
<div class="t " style="left:12px;top:145px;width:66px;overflow:hidden;letter-spacing:-0.35px">EndlessHeight</div>
<div class="cb" style="left:81px;top:146px"></div>
<div class="t nv " style="left:94px;top:145px;width:45px;overflow:hidden">False</div>
<div class="a" style="left:0px;top:175px;width:138px;height:1px;background:#f0f0f0"></div>
<div class="t " style="left:12px;top:161px;width:66px;overflow:hidden;letter-spacing:-0.35px">EndlessWidth</div>
<div class="cb" style="left:81px;top:162px"></div>
<div class="t nv " style="left:94px;top:161px;width:45px;overflow:hidden">False</div>
<div class="a" style="left:0px;top:191px;width:138px;height:1px;background:#f0f0f0"></div>
<svg style="left:2px;top:179px" width="9" height="9" viewBox="0 0 9 9"><rect x="0.500" y="0.500" width="8" height="8" fill="#fff" stroke="#989898"/><path d="M2 4.500h5M4.500 2v5" stroke="#444"/></svg>
<div class="t " style="left:13px;top:177px;width:65px;overflow:hidden;letter-spacing:-0.35px">Font</div>
<div class="t nv " style="left:81px;top:177px;width:58px;overflow:hidden">(TFont)</div>
<div class="a" style="left:0px;top:207px;width:138px;height:1px;background:#f0f0f0"></div>
<svg style="left:2px;top:195px" width="9" height="9" viewBox="0 0 9 9"><rect x="0.500" y="0.500" width="8" height="8" fill="#fff" stroke="#989898"/><path d="M2 4.500h5M4.500 2v5" stroke="#444"/></svg>
<div class="t " style="left:13px;top:193px;width:65px;overflow:hidden;letter-spacing:-0.35px">Frame</div>
<div class="t nv " style="left:81px;top:193px;width:58px;overflow:hidden">(TfrxFrame)</div>
<div class="a" style="left:0px;top:223px;width:138px;height:1px;background:#f0f0f0"></div>
<div class="t " style="left:12px;top:209px;width:66px;overflow:hidden;letter-spacing:-0.35px">LargeDesignHeight</div>
<div class="cb" style="left:81px;top:210px"></div>
<div class="t nv " style="left:94px;top:209px;width:45px;overflow:hidden">False</div>
<div class="a" style="left:0px;top:239px;width:138px;height:1px;background:#f0f0f0"></div>
<div class="t " style="left:12px;top:225px;width:66px;overflow:hidden;letter-spacing:-0.35px">LeftMargin</div>
<div class="t nv " style="left:81px;top:225px;width:58px;overflow:hidden">1</div>
<div class="a" style="left:0px;top:255px;width:138px;height:1px;background:#f0f0f0"></div>
<div class="t " style="left:12px;top:241px;width:66px;overflow:hidden;letter-spacing:-0.35px">MirrorMargins</div>
<div class="cb" style="left:81px;top:242px"></div>
<div class="t nv " style="left:94px;top:241px;width:45px;overflow:hidden">False</div>
<div class="a" style="left:0px;top:271px;width:138px;height:1px;background:#f0f0f0"></div>
<svg style="left:2px;top:259px" width="9" height="9" viewBox="0 0 9 9"><rect x="0.500" y="0.500" width="8" height="8" fill="#fff" stroke="#989898"/><path d="M2 4.500h5M4.500 2v5" stroke="#444"/></svg>
<div class="t " style="left:13px;top:257px;width:65px;overflow:hidden;letter-spacing:-0.35px">MirrorMode</div>
<div class="t nv " style="left:81px;top:257px;width:58px;overflow:hidden">[]</div>
<div class="a" style="left:0px;top:287px;width:138px;height:1px;background:#f0f0f0"></div>
<div class="t b" style="left:12px;top:273px;width:66px;overflow:hidden">Name</div>
<div class="t nv b" style="left:81px;top:273px;width:58px;overflow:hidden">Page1</div>
<div class="a" style="left:0px;top:303px;width:138px;height:1px;background:#f0f0f0"></div>
<div class="t " style="left:12px;top:289px;width:66px;overflow:hidden;letter-spacing:-0.35px">Orientation</div>
<div class="t nv " style="left:81px;top:289px;width:58px;overflow:hidden">poPortrait</div>
<div class="a" style="left:0px;top:319px;width:138px;height:1px;background:#f0f0f0"></div>
<div class="t " style="left:12px;top:305px;width:66px;overflow:hidden;letter-spacing:-0.35px">OutlineText</div>
<div class="t nv " style="left:81px;top:305px;width:58px;overflow:hidden"></div>
<div class="a" style="left:0px;top:335px;width:138px;height:1px;background:#f0f0f0"></div>
<div class="t " style="left:12px;top:321px;width:66px;overflow:hidden;letter-spacing:-0.35px">PageCount</div>
<div class="t nv " style="left:81px;top:321px;width:58px;overflow:hidden">1</div>
<div class="a" style="left:0px;top:351px;width:138px;height:1px;background:#f0f0f0"></div>
<div class="t " style="left:12px;top:337px;width:66px;overflow:hidden;letter-spacing:-0.35px">PaperHeight</div>
<div class="t nv " style="left:81px;top:337px;width:58px;overflow:hidden">29,70</div>
<div class="a" style="left:0px;top:367px;width:138px;height:1px;background:#f0f0f0"></div>
<div class="t " style="left:12px;top:353px;width:66px;overflow:hidden;letter-spacing:-0.35px">PaperSize</div>
<div class="t nv " style="left:81px;top:353px;width:58px;overflow:hidden">A4</div>
<div class="a" style="left:0px;top:383px;width:138px;height:1px;background:#f0f0f0"></div>
<div class="t " style="left:12px;top:369px;width:66px;overflow:hidden;letter-spacing:-0.35px">PaperWidth</div>
<div class="t nv " style="left:81px;top:369px;width:58px;overflow:hidden">21</div>
<div class="a" style="left:0px;top:399px;width:138px;height:1px;background:#f0f0f0"></div>
<div class="t " style="left:12px;top:385px;width:66px;overflow:hidden;letter-spacing:-0.35px">PrintIfEmpty</div>
<div class="cb" style="left:81px;top:386px"></div>
<svg style="left:82px;top:387px" width="9" height="9" viewBox="0 0 9 9"><path d="M1.500 4.500l2 2.500l4-5" fill="none" stroke="#000" stroke-width="1.900"/></svg>
<div class="t nv " style="left:94px;top:385px;width:45px;overflow:hidden">True</div>
<div class="a" style="left:0px;top:415px;width:138px;height:1px;background:#f0f0f0"></div>
<div class="t " style="left:12px;top:401px;width:66px;overflow:hidden;letter-spacing:-0.35px">PrintOnPreviousPage</div>
<div class="cb" style="left:81px;top:402px"></div>
<div class="t nv " style="left:94px;top:401px;width:45px;overflow:hidden">False</div>
<div class="a" style="left:0px;top:431px;width:138px;height:1px;background:#f0f0f0"></div>
<div class="t " style="left:12px;top:417px;width:66px;overflow:hidden;letter-spacing:-0.35px">ResetPageNumbers</div>
<div class="cb" style="left:81px;top:418px"></div>
<div class="t nv " style="left:94px;top:417px;width:45px;overflow:hidden">False</div>
<div class="a" style="left:78px;top:0px;width:1px;height:420px;background:#f0f0f0"></div>
<div class="a" style="left:139px;top:-1px;width:16px;height:421px;background:#f0f0f0"></div>
<div class="a" style="left:139px;top:17px;width:15px;height:306px;background:#cdcdcd"></div>
<svg style="left:142.7px;top:6px" width="8" height="6" viewBox="0 0 8 6"><path d="M0.700 4.800l3.300-3.300l3.300 3.300" fill="none" stroke="#5a5a5a" stroke-width="1.800"/></svg>
<svg style="left:142.7px;top:407.5px" width="8" height="6" viewBox="0 0 8 6"><path d="M0.700 1.200l3.300 3.300l3.300-3.300" fill="none" stroke="#5a5a5a" stroke-width="1.800"/></svg>
</div>
<svg style="left:187px;top:536px" width="6" height="34" viewBox="0 0 6 34"><rect width="6" height="34" fill="#c8c8c8"/><rect x="2" y="3.5" width="1.500" height="1.500" fill="#fff"/><rect x="3" y="4.5" width="1.500" height="1.500" fill="#787878"/><rect x="2" y="8.5" width="1.500" height="1.500" fill="#fff"/><rect x="3" y="9.5" width="1.500" height="1.500" fill="#787878"/><rect x="2" y="13.5" width="1.500" height="1.500" fill="#fff"/><rect x="3" y="14.5" width="1.500" height="1.500" fill="#787878"/><rect x="2" y="18.5" width="1.500" height="1.500" fill="#fff"/><rect x="3" y="19.5" width="1.500" height="1.500" fill="#787878"/><rect x="2" y="23.5" width="1.500" height="1.500" fill="#fff"/><rect x="3" y="24.5" width="1.500" height="1.500" fill="#787878"/><rect x="2" y="28.5" width="1.500" height="1.500" fill="#fff"/><rect x="3" y="29.5" width="1.500" height="1.500" fill="#787878"/></svg>
<div class="a" style="left:28px;top:922px;width:159px;height:65px;background:#fff;border:1px solid #a0a0a0"></div>
<div class="t b" style="left:30px;top:924px;">PropL</div>
<div class="t " style="left:30px;top:940px;">DescrL</div>
<div class="a" style="left:264px;top:122px;width:790px;height:14px;background:#fff"></div>
<svg style="left:264px;top:122px" width="790" height="14" viewBox="0 0 790 14"><path d="M19.5 6v4" stroke="#000"/><text x="39.5" y="10.800" font-size="9.800" text-anchor="middle" font-family="Liberation Sans,sans-serif" letter-spacing="0">1</text><path d="M57.5 6v4" stroke="#000"/><text x="77.5" y="10.800" font-size="9.800" text-anchor="middle" font-family="Liberation Sans,sans-serif" letter-spacing="0">2</text><path d="M94.5 6v4" stroke="#000"/><text x="114.5" y="10.800" font-size="9.800" text-anchor="middle" font-family="Liberation Sans,sans-serif" letter-spacing="0">3</text><path d="M132.5 6v4" stroke="#000"/><text x="152.5" y="10.800" font-size="9.800" text-anchor="middle" font-family="Liberation Sans,sans-serif" letter-spacing="0">4</text><path d="M170.5 6v4" stroke="#000"/><text x="190.5" y="10.800" font-size="9.800" text-anchor="middle" font-family="Liberation Sans,sans-serif" letter-spacing="0">5</text><path d="M208.5 6v4" stroke="#000"/><text x="228.5" y="10.800" font-size="9.800" text-anchor="middle" font-family="Liberation Sans,sans-serif" letter-spacing="0">6</text><path d="M246.5 6v4" stroke="#000"/><text x="265.5" y="10.800" font-size="9.800" text-anchor="middle" font-family="Liberation Sans,sans-serif" letter-spacing="0">7</text><path d="M283.5 6v4" stroke="#000"/><text x="303.5" y="10.800" font-size="9.800" text-anchor="middle" font-family="Liberation Sans,sans-serif" letter-spacing="0">8</text><path d="M321.5 6v4" stroke="#000"/><text x="341.5" y="10.800" font-size="9.800" text-anchor="middle" font-family="Liberation Sans,sans-serif" letter-spacing="0">9</text><path d="M359.5 6v4" stroke="#000"/><text x="379.5" y="10.800" font-size="9.800" text-anchor="middle" font-family="Liberation Sans,sans-serif" letter-spacing="0">10</text><path d="M397.5 6v4" stroke="#000"/><text x="417.5" y="10.800" font-size="9.800" text-anchor="middle" font-family="Liberation Sans,sans-serif" letter-spacing="0">11</text><path d="M435.5 6v4" stroke="#000"/><text x="454.5" y="10.800" font-size="9.800" text-anchor="middle" font-family="Liberation Sans,sans-serif" letter-spacing="0">12</text><path d="M472.5 6v4" stroke="#000"/><text x="492.5" y="10.800" font-size="9.800" text-anchor="middle" font-family="Liberation Sans,sans-serif" letter-spacing="0">13</text><path d="M510.5 6v4" stroke="#000"/><text x="530.5" y="10.800" font-size="9.800" text-anchor="middle" font-family="Liberation Sans,sans-serif" letter-spacing="0">14</text><path d="M548.5 6v4" stroke="#000"/><text x="568.5" y="10.800" font-size="9.800" text-anchor="middle" font-family="Liberation Sans,sans-serif" letter-spacing="0">15</text><path d="M586.5 6v4" stroke="#000"/><text x="606.5" y="10.800" font-size="9.800" text-anchor="middle" font-family="Liberation Sans,sans-serif" letter-spacing="0">16</text><path d="M624.5 6v4" stroke="#000"/><text x="643.5" y="10.800" font-size="9.800" text-anchor="middle" font-family="Liberation Sans,sans-serif" letter-spacing="0">17</text><path d="M661.5 6v4" stroke="#000"/><text x="681.5" y="10.800" font-size="9.800" text-anchor="middle" font-family="Liberation Sans,sans-serif" letter-spacing="0">18</text><path d="M699.5 6v4" stroke="#000"/><text x="719.5" y="10.800" font-size="9.800" text-anchor="middle" font-family="Liberation Sans,sans-serif" letter-spacing="0">19</text><path d="M737.5 6v4" stroke="#000"/><text x="757.5" y="10.800" font-size="9.800" text-anchor="middle" font-family="Liberation Sans,sans-serif" letter-spacing="0">20</text><path d="M775.5 6v4" stroke="#000"/><path d="M266.500 0v13" stroke="#000" stroke-width="1.200"/></svg>
<div class="a" style="left:196px;top:191px;width:13px;height:796px;background:#fff"></div>
<svg style="left:196px;top:191px;overflow:hidden" width="13" height="796" viewBox="0 0 13 796"><path d="M5 19.5h4" stroke="#000"/><text transform="translate(9.800,38.5) rotate(-90)" font-size="9.800" text-anchor="middle" font-family="Liberation Sans,sans-serif" letter-spacing="0">1</text><path d="M5 57.5h4" stroke="#000"/><text transform="translate(9.800,76.5) rotate(-90)" font-size="9.800" text-anchor="middle" font-family="Liberation Sans,sans-serif" letter-spacing="0">2</text><path d="M5 94.5h4" stroke="#000"/><text transform="translate(9.800,113.5) rotate(-90)" font-size="9.800" text-anchor="middle" font-family="Liberation Sans,sans-serif" letter-spacing="0">3</text><path d="M5 132.5h4" stroke="#000"/><text transform="translate(9.800,151.5) rotate(-90)" font-size="9.800" text-anchor="middle" font-family="Liberation Sans,sans-serif" letter-spacing="0">4</text><path d="M5 170.5h4" stroke="#000"/><text transform="translate(9.800,189.5) rotate(-90)" font-size="9.800" text-anchor="middle" font-family="Liberation Sans,sans-serif" letter-spacing="0">5</text><path d="M5 208.5h4" stroke="#000"/><text transform="translate(9.800,227.5) rotate(-90)" font-size="9.800" text-anchor="middle" font-family="Liberation Sans,sans-serif" letter-spacing="0">6</text><path d="M5 246.5h4" stroke="#000"/><text transform="translate(9.800,264.5) rotate(-90)" font-size="9.800" text-anchor="middle" font-family="Liberation Sans,sans-serif" letter-spacing="0">7</text><path d="M5 283.5h4" stroke="#000"/><text transform="translate(9.800,302.5) rotate(-90)" font-size="9.800" text-anchor="middle" font-family="Liberation Sans,sans-serif" letter-spacing="0">8</text><path d="M5 321.5h4" stroke="#000"/><text transform="translate(9.800,340.5) rotate(-90)" font-size="9.800" text-anchor="middle" font-family="Liberation Sans,sans-serif" letter-spacing="0">9</text><path d="M5 359.5h4" stroke="#000"/><text transform="translate(9.800,379.5) rotate(-90)" font-size="9.800" text-anchor="middle" font-family="Liberation Sans,sans-serif" letter-spacing="0">10</text><path d="M5 397.5h4" stroke="#000"/><text transform="translate(9.800,417.5) rotate(-90)" font-size="9.800" text-anchor="middle" font-family="Liberation Sans,sans-serif" letter-spacing="0">11</text><path d="M5 435.5h4" stroke="#000"/><text transform="translate(9.800,454.5) rotate(-90)" font-size="9.800" text-anchor="middle" font-family="Liberation Sans,sans-serif" letter-spacing="0">12</text><path d="M5 472.5h4" stroke="#000"/><text transform="translate(9.800,492.5) rotate(-90)" font-size="9.800" text-anchor="middle" font-family="Liberation Sans,sans-serif" letter-spacing="0">13</text><path d="M5 510.5h4" stroke="#000"/><text transform="translate(9.800,530.5) rotate(-90)" font-size="9.800" text-anchor="middle" font-family="Liberation Sans,sans-serif" letter-spacing="0">14</text><path d="M5 548.5h4" stroke="#000"/><text transform="translate(9.800,568.5) rotate(-90)" font-size="9.800" text-anchor="middle" font-family="Liberation Sans,sans-serif" letter-spacing="0">15</text><path d="M5 586.5h4" stroke="#000"/><text transform="translate(9.800,606.5) rotate(-90)" font-size="9.800" text-anchor="middle" font-family="Liberation Sans,sans-serif" letter-spacing="0">16</text><path d="M5 624.5h4" stroke="#000"/><text transform="translate(9.800,643.5) rotate(-90)" font-size="9.800" text-anchor="middle" font-family="Liberation Sans,sans-serif" letter-spacing="0">17</text><path d="M5 661.5h4" stroke="#000"/><text transform="translate(9.800,681.5) rotate(-90)" font-size="9.800" text-anchor="middle" font-family="Liberation Sans,sans-serif" letter-spacing="0">18</text><path d="M5 699.5h4" stroke="#000"/><text transform="translate(9.800,719.5) rotate(-90)" font-size="9.800" text-anchor="middle" font-family="Liberation Sans,sans-serif" letter-spacing="0">19</text><path d="M5 737.5h4" stroke="#000"/><text transform="translate(9.800,757.5) rotate(-90)" font-size="9.800" text-anchor="middle" font-family="Liberation Sans,sans-serif" letter-spacing="0">20</text><path d="M5 775.5h4" stroke="#000"/><text transform="translate(9.800,795.5) rotate(-90)" font-size="9.800" text-anchor="middle" font-family="Liberation Sans,sans-serif" letter-spacing="0">21</text></svg>
<div class="a" style="left:214px;top:141px;width:824px;height:846px;background:#808080"></div>
<div class="a" style="left:224px;top:151px;width:793px;height:836px;background:#fff;border:1px solid #484848;border-bottom:none"></div>
<div class="a" style="left:262px;top:190px;width:720px;height:797px;overflow:hidden">
<svg style="left:0;top:0" width="720" height="797" viewBox="0 0 720 797" shape-rendering="crispEdges"><path d="M19.5 0v797" stroke="#f5f5f5"/><path d="M38.5 0v797" stroke="#e9e9e9"/><path d="M57.5 0v797" stroke="#f5f5f5"/><path d="M76.5 0v797" stroke="#e9e9e9"/><path d="M94.5 0v797" stroke="#f5f5f5"/><path d="M113.5 0v797" stroke="#e9e9e9"/><path d="M132.5 0v797" stroke="#f5f5f5"/><path d="M151.5 0v797" stroke="#e9e9e9"/><path d="M170.5 0v797" stroke="#f5f5f5"/><path d="M189.5 0v797" stroke="#e9e9e9"/><path d="M208.5 0v797" stroke="#f5f5f5"/><path d="M227.5 0v797" stroke="#e9e9e9"/><path d="M246.5 0v797" stroke="#f5f5f5"/><path d="M264.5 0v797" stroke="#e9e9e9"/><path d="M283.5 0v797" stroke="#f5f5f5"/><path d="M302.5 0v797" stroke="#e9e9e9"/><path d="M321.5 0v797" stroke="#f5f5f5"/><path d="M340.5 0v797" stroke="#e9e9e9"/><path d="M359.5 0v797" stroke="#f5f5f5"/><path d="M378.5 0v797" stroke="#e9e9e9"/><path d="M397.5 0v797" stroke="#f5f5f5"/><path d="M416.5 0v797" stroke="#e9e9e9"/><path d="M435.5 0v797" stroke="#f5f5f5"/><path d="M453.5 0v797" stroke="#e9e9e9"/><path d="M472.5 0v797" stroke="#f5f5f5"/><path d="M491.5 0v797" stroke="#e9e9e9"/><path d="M510.5 0v797" stroke="#f5f5f5"/><path d="M529.5 0v797" stroke="#e9e9e9"/><path d="M548.5 0v797" stroke="#f5f5f5"/><path d="M567.5 0v797" stroke="#e9e9e9"/><path d="M586.5 0v797" stroke="#f5f5f5"/><path d="M605.5 0v797" stroke="#e9e9e9"/><path d="M624.5 0v797" stroke="#f5f5f5"/><path d="M642.5 0v797" stroke="#e9e9e9"/><path d="M661.5 0v797" stroke="#f5f5f5"/><path d="M680.5 0v797" stroke="#e9e9e9"/><path d="M699.5 0v797" stroke="#f5f5f5"/><path d="M718.5 0v797" stroke="#e9e9e9"/><path d="M0 18.5h720" stroke="#f5f5f5"/><path d="M0 37.5h720" stroke="#e9e9e9"/><path d="M0 56.5h720" stroke="#f5f5f5"/><path d="M0 75.5h720" stroke="#e9e9e9"/><path d="M0 93.5h720" stroke="#f5f5f5"/><path d="M0 112.5h720" stroke="#e9e9e9"/><path d="M0 131.5h720" stroke="#f5f5f5"/><path d="M0 150.5h720" stroke="#e9e9e9"/><path d="M0 169.5h720" stroke="#f5f5f5"/><path d="M0 188.5h720" stroke="#e9e9e9"/><path d="M0 207.5h720" stroke="#f5f5f5"/><path d="M0 226.5h720" stroke="#e9e9e9"/><path d="M0 245.5h720" stroke="#f5f5f5"/><path d="M0 263.5h720" stroke="#e9e9e9"/><path d="M0 282.5h720" stroke="#f5f5f5"/><path d="M0 301.5h720" stroke="#e9e9e9"/><path d="M0 320.5h720" stroke="#f5f5f5"/><path d="M0 339.5h720" stroke="#e9e9e9"/><path d="M0 358.5h720" stroke="#f5f5f5"/><path d="M0 377.5h720" stroke="#e9e9e9"/><path d="M0 396.5h720" stroke="#f5f5f5"/><path d="M0 415.5h720" stroke="#e9e9e9"/><path d="M0 434.5h720" stroke="#f5f5f5"/><path d="M0 452.5h720" stroke="#e9e9e9"/><path d="M0 471.5h720" stroke="#f5f5f5"/><path d="M0 490.5h720" stroke="#e9e9e9"/><path d="M0 509.5h720" stroke="#f5f5f5"/><path d="M0 528.5h720" stroke="#e9e9e9"/><path d="M0 547.5h720" stroke="#f5f5f5"/><path d="M0 566.5h720" stroke="#e9e9e9"/><path d="M0 585.5h720" stroke="#f5f5f5"/><path d="M0 604.5h720" stroke="#e9e9e9"/><path d="M0 623.5h720" stroke="#f5f5f5"/><path d="M0 641.5h720" stroke="#e9e9e9"/><path d="M0 660.5h720" stroke="#f5f5f5"/><path d="M0 679.5h720" stroke="#e9e9e9"/><path d="M0 698.5h720" stroke="#f5f5f5"/><path d="M0 717.5h720" stroke="#e9e9e9"/><path d="M0 736.5h720" stroke="#f5f5f5"/><path d="M0 755.5h720" stroke="#e9e9e9"/><path d="M0 774.5h720" stroke="#f5f5f5"/><path d="M0 793.5h720" stroke="#e9e9e9"/></svg>
</div>
<div class="a" style="left:261px;top:189px;width:1px;height:798px;background-image:linear-gradient(180deg,#b0b0b0 50%,#fff 50%);background-size:1px 6px"></div>
<div class="a" style="left:981px;top:189px;width:1px;height:798px;background-image:linear-gradient(180deg,#b0b0b0 50%,#fff 50%);background-size:1px 6px"></div>
<div class="a" style="left:261px;top:188px;width:721px;height:1px;background-image:linear-gradient(90deg,#a8a8a8 50%,#fff 50%);background-size:6px 1px;background-position:2px 0"></div>
<div class="a" style="left:262px;top:189px;width:719px;height:80px;border:1px solid #787878"></div>
<div class="a" style="left:263px;top:190px;width:717px;height:17px;background:#f0f0f0"></div>
<div class="t" style="left:268px;top:191px;font-size:11px"><b style="font-size:11.5px;letter-spacing:0.25px">ReportTitle:</b> ReportTitle1</div>
<div class="a" style="left:262px;top:310px;width:719px;height:45px;border:1px solid #787878"></div>
<div class="a" style="left:263px;top:311px;width:717px;height:18px;background:#f0f0f0"></div>
<div class="t" style="left:268px;top:312px;font-size:11px"><b style="font-size:11.5px;letter-spacing:0.25px">Header:</b> Header1</div>
<div class="a" style="left:262px;top:359px;width:719px;height:45px;border:1px solid #787878"></div>
<div class="a" style="left:263px;top:360px;width:717px;height:18px;background:#e0a830"></div>
<div class="t" style="left:268px;top:361px;font-size:11px"><b style="font-size:11.5px;letter-spacing:0.25px">MasterData:</b> MasterData1</div>
<div class="a" style="left:262px;top:446px;width:719px;height:45px;border:1px solid #787878"></div>
<div class="a" style="left:263px;top:447px;width:717px;height:18px;background:#f0f0f0"></div>
<div class="t" style="left:268px;top:448px;font-size:11px"><b style="font-size:11.5px;letter-spacing:0.25px">Seitenfuß:</b> PageFooter1</div>
<div class="mm" style="left:262px;top:208px;width:719px;height:61px"><i class="tl"></i><i class="tr"></i><i class="bl"></i><i class="br"></i><div class="a" style="left:0;right:0;top:2px;text-align:center;font-weight:bold;font-size:23.500px;line-height:28px;letter-spacing:0">Report</div></div>
<div class="a" style="left:262px;top:238px;width:4px;height:1px;background:#000"></div>
<div class="a" style="left:977px;top:238px;width:4px;height:1px;background:#000"></div>
<div class="mm" style="left:262px;top:329px;width:130px;height:26px"><i class="tl"></i><i class="tr"></i><i class="bl"></i><i class="br"></i><div class="mt" style="text-align:left;font-weight:bold;font-size:13.33px">Computer Name</div></div>
<div class="mm" style="left:401px;top:329px;width:130px;height:26px"><i class="tl"></i><i class="tr"></i><i class="bl"></i><i class="br"></i><div class="mt" style="text-align:left;font-weight:bold;font-size:13.33px">Computer Domain</div></div>
<div class="mm" style="left:540px;top:329px;width:129px;height:26px"><i class="tl"></i><i class="tr"></i><i class="bl"></i><i class="br"></i><div class="mt" style="text-align:left;font-weight:bold;font-size:13.33px">ACMP Client MAC Address</div></div>
<div class="mm" style="left:678px;top:329px;width:130px;height:26px"><i class="tl"></i><i class="tr"></i><i class="bl"></i><i class="br"></i><div class="mt" style="text-align:left;font-weight:bold;font-size:13.33px">Primary IP</div></div>
<div class="mm" style="left:817px;top:329px;width:130px;height:26px"><i class="tl"></i><i class="tr"></i><i class="bl"></i><i class="br"></i><div class="mt" style="text-align:left;font-weight:bold;font-size:13.33px">Computer Description</div></div>
<div class="mm" style="left:262px;top:378px;width:130px;height:26px"><i class="tl"></i><i class="tr"></i><i class="bl"></i><i class="br"></i><div class="mt" style="text-align:left;font-size:13.33px;word-spacing:0.7px">[Main data."Computer Name"]</div></div>
<div class="mm" style="left:401px;top:378px;width:130px;height:26px"><i class="tl"></i><i class="tr"></i><i class="bl"></i><i class="br"></i><div class="mt" style="text-align:left;font-size:13.33px;word-spacing:0.3px">[Main data."Computer Domain"]</div></div>
<div class="mm" style="left:540px;top:378px;width:129px;height:26px"><i class="tl"></i><i class="tr"></i><i class="bl"></i><i class="br"></i><div class="mt" style="text-align:left;font-size:13.33px;word-spacing:0.3px">[Main data."ACMP Client MAC"]</div></div>
<div class="mm" style="left:678px;top:378px;width:130px;height:26px"><i class="tl"></i><i class="tr"></i><i class="bl"></i><i class="br"></i><div class="mt" style="text-align:left;font-size:13.33px;word-spacing:0.3px">[Main data."Primary IP"]</div></div>
<div class="mm" style="left:817px;top:378px;width:130px;height:26px"><i class="tl"></i><i class="tr"></i><i class="bl"></i><i class="br"></i><div class="mt" style="text-align:left;font-size:13.33px;word-spacing:-0.6px">[Main data."Computer Description"]</div></div>
<div class="mm" style="left:521px;top:465px;width:200px;height:26px"><i class="tl"></i><i class="tr"></i><i class="bl"></i><i class="br"></i><div class="mt" style="text-align:center;font-size:13.33px">[Page#]</div></div>
<div class="mm" style="left:780px;top:465px;width:201px;height:26px"><i class="tl"></i><i class="tr"></i><i class="bl"></i><i class="br"></i><div class="mt" style="text-align:right;font-size:13.33px">[Date]</div></div>
<svg style="left:915px;top:362px" width="12" height="14" viewBox="0 0 12 14"><defs><linearGradient id="cyl" x1="0" y1="0" x2="1" y2="0"><stop offset="0" stop-color="#fff0b0"/><stop offset="0.5" stop-color="#f4c030"/><stop offset="1" stop-color="#e09a10"/></linearGradient></defs><path d="M1 3v9q5 3 10 0v-9z" fill="url(#cyl)" stroke="#fff4c8" stroke-width="0.900" stroke-dasharray="1.500 0.800"/><ellipse cx="6" cy="3" rx="5" ry="2" fill="#fff0b8" stroke="#fff8dc" stroke-width="0.800"/></svg>
<div class="t " style="left:930px;top:362px;">Main data</div>
<div class="a" style="left:1037px;top:141px;width:1px;height:846px;background:#fff"></div>
<div class="a" style="left:1038px;top:141px;width:15px;height:846px;background:#f0f0f0"></div>
<div class="a" style="left:1038px;top:158px;width:15px;height:601px;background:#cdcdcd"></div>
<svg style="left:1041.5px;top:147px" width="8" height="6" viewBox="0 0 8 6"><path d="M0.700 4.800l3.300-3.300l3.300 3.300" fill="none" stroke="#5a5a5a" stroke-width="1.800"/></svg>
<svg style="left:1041.5px;top:976px" width="8" height="6" viewBox="0 0 8 6"><path d="M0.700 1.200l3.300 3.300l3.300-3.300" fill="none" stroke="#5a5a5a" stroke-width="1.800"/></svg>
<svg style="left:1054px;top:536px" width="6" height="34" viewBox="0 0 6 34"><rect width="6" height="34" fill="#c8c8c8"/><rect x="2" y="3.5" width="1.500" height="1.500" fill="#fff"/><rect x="3" y="4.5" width="1.500" height="1.500" fill="#787878"/><rect x="2" y="8.5" width="1.500" height="1.500" fill="#fff"/><rect x="3" y="9.5" width="1.500" height="1.500" fill="#787878"/><rect x="2" y="13.5" width="1.500" height="1.500" fill="#fff"/><rect x="3" y="14.5" width="1.500" height="1.500" fill="#787878"/><rect x="2" y="18.5" width="1.500" height="1.500" fill="#fff"/><rect x="3" y="19.5" width="1.500" height="1.500" fill="#787878"/><rect x="2" y="23.5" width="1.500" height="1.500" fill="#fff"/><rect x="3" y="24.5" width="1.500" height="1.500" fill="#787878"/><rect x="2" y="28.5" width="1.500" height="1.500" fill="#fff"/><rect x="3" y="29.5" width="1.500" height="1.500" fill="#787878"/></svg>
<svg style="left:1063px;top:121px" width="332" height="9" viewBox="0 0 332 9"><defs><pattern id="gp3" width="5" height="4" patternUnits="userSpaceOnUse"><rect x="0" y="0" width="2" height="2" fill="#fbfbfb"/><rect x="1" y="1" width="1.500" height="1.500" fill="#b2b2b2"/><rect x="0.500" y="1.500" width="1" height="0.700" fill="#d0d0d0"/></pattern></defs><rect width="332" height="8" fill="url(#gp3)"/></svg>
<svg style="left:1398px;top:120px" width="10" height="10" viewBox="0 0 10 10"><path d="M1 1h8.500L5.300 5.500z" fill="#f4b0a0"/><path d="M1 1v8.500L5.300 5.500z" fill="#ea7c64"/><path d="M1.800 2.300l7 6.700M9.300 2.300l-7 6.700" stroke="#3a3048" stroke-width="2.600"/><path d="M2.200 2.700l6.800 6.500M8.900 2.700l-6.600 6.400" stroke="#fff" stroke-width="1.500"/><path d="M0.500 9.300V1.800Q0.500 0.500 1.800 0.500H8.500Q9.700 0.500 9.700 2" fill="none" stroke="#4a0e1e" stroke-width="1.100"/></svg>
<div class="a hatch" style="left:1060px;top:131px;width:350px;height:18px"></div>
<svg style="left:1065px;top:134px" width="210.5" height="16" viewBox="0 0 210.5 16"><path d="M160.0 15.5L164.8 2.500Q165.5 0.500 167.5 0.500H201.5Q203.5 0.500 204.2 2.500L209.0 15.5" fill="#fff" stroke="#8e8e8e"/><path d="M96.5 15.5L101.3 2.500Q102.0 0.500 104.0 0.500H155.0Q157.0 0.500 157.7 2.500L162.5 15.5" fill="#fff" stroke="#8e8e8e"/><path d="M2.5 15.5L7.3 2.500Q8.0 0.500 10.0 0.500H37.5Q39.5 0.500 40.2 2.500L45.0 15.5" fill="#fff" stroke="#8e8e8e"/><path d="M42.0 15.5L46.8 2.500Q47.5 0.500 49.5 0.500H92.0Q94.0 0.500 94.7 2.500L99.5 15.5" fill="#f0f0f0" stroke="#8e8e8e"/><path d="M43.0 15.5H98.5" stroke="#f0f0f0"/></svg>
<div class="t" style="left:1067px;width:42.5px;text-align:center;top:135px;font-size:11px">Daten</div>
<div class="t" style="left:1106.5px;width:57.5px;text-align:center;top:135px;font-size:11px">Variablen</div>
<div class="t" style="left:1161px;width:66px;text-align:center;top:135px;font-size:11px">Funktionen</div>
<div class="t" style="left:1224.5px;width:49.0px;text-align:center;top:135px;font-size:11px">Klassen</div>
<div class="a" style="left:1060px;top:149px;width:350px;height:838px;background:#fff;border:1px solid #a0a0a0"></div>
<div class="a" style="left:1061px;top:984px;width:1347px;height:1px;background:#a6a6a6"></div>
<div class="a" style="left:1407px;top:150px;width:1px;height:835px;background:#a6a6a6"></div>
<svg style="left:1067px;top:152px" width="16" height="16" viewBox="0 0 16 16"><defs><linearGradient id="g53" x1="0" y1="0" x2="1" y2="1"><stop offset="0" stop-color="#ffeaa4"/><stop offset="1" stop-color="#eaa932"/></linearGradient></defs><path d="M0.500 3.500Q0.500 2.500 1.500 2.500H5Q6 2.500 6.300 3.500L6.600 4.500H13Q14 4.500 14 5.500V13Q14 14 13 14H1.500Q0.500 14 0.500 13Z" fill="url(#g53)" stroke="#c87a28"/><path d="M1.500 5.500H12.800M1.500 5.500V13" stroke="#fff6d8" fill="none"/></svg>
<div class="t b" style="left:1087px;top:153px;">Variablen</div>
<svg style="left:1085px;top:168px" width="15" height="16" viewBox="0 0 15 16"><rect x="0.500" y="4.500" width="14" height="7" fill="#f2f5fb" stroke="#9ab4d8"/><path d="M0.500 11.500h14.500M14.500 5v6.500" stroke="#3c5a82" fill="none"/><text x="1.800" y="10.300" font-family="Liberation Mono,monospace" font-size="6.500" font-weight="bold" fill="#50586a" textLength="11" lengthAdjust="spacingAndGlyphs">Abc</text></svg>
<div class="t " style="left:1106px;top:169px;letter-spacing:-0.3px">Current ACMP Console username</div>
<svg style="left:1069px;top:189px" width="10" height="6" viewBox="0 0 10 6"><path d="M1 1l4 4l4-4" fill="none" stroke="#444" stroke-width="1.600"/></svg>
<svg style="left:1086px;top:184px" width="16" height="16" viewBox="0 0 16 16"><defs><linearGradient id="g54" x1="0" y1="0" x2="1" y2="1"><stop offset="0" stop-color="#ffeaa4"/><stop offset="1" stop-color="#eaa932"/></linearGradient></defs><path d="M0.500 3.500Q0.500 2.500 1.500 2.500H5Q6 2.500 6.300 3.500L6.600 4.500H13Q14 4.500 14 5.500V13Q14 14 13 14H1.500Q0.500 14 0.500 13Z" fill="url(#g54)" stroke="#c87a28"/><path d="M1.500 5.500H12.800M1.500 5.500V13" stroke="#fff6d8" fill="none"/></svg>
<div class="t b" style="left:1106px;top:185px;">Systemvariablen</div>
<svg style="left:1104px;top:200px" width="15" height="16" viewBox="0 0 15 16"><rect x="0.500" y="4.500" width="14" height="7" fill="#f2f5fb" stroke="#9ab4d8"/><path d="M0.500 11.500h14.500M14.500 5v6.500" stroke="#3c5a82" fill="none"/><text x="1.800" y="10.300" font-family="Liberation Mono,monospace" font-size="6.500" font-weight="bold" fill="#50586a" textLength="11" lengthAdjust="spacingAndGlyphs">Abc</text></svg>
<div class="t " style="left:1124px;top:201px;">Date</div>
<div class="a" style="left:1094px;top:208px;width:10px;height:1px;background-image:linear-gradient(90deg,#8c8c8c 50%,transparent 50%);background-size:2px 1px"></div>
<svg style="left:1104px;top:216px" width="15" height="16" viewBox="0 0 15 16"><rect x="0.500" y="4.500" width="14" height="7" fill="#f2f5fb" stroke="#9ab4d8"/><path d="M0.500 11.500h14.500M14.500 5v6.500" stroke="#3c5a82" fill="none"/><text x="1.800" y="10.300" font-family="Liberation Mono,monospace" font-size="6.500" font-weight="bold" fill="#50586a" textLength="11" lengthAdjust="spacingAndGlyphs">Abc</text></svg>
<div class="t " style="left:1124px;top:217px;">Time</div>
<div class="a" style="left:1094px;top:224px;width:10px;height:1px;background-image:linear-gradient(90deg,#8c8c8c 50%,transparent 50%);background-size:2px 1px"></div>
<svg style="left:1104px;top:232px" width="15" height="16" viewBox="0 0 15 16"><rect x="0.500" y="4.500" width="14" height="7" fill="#f2f5fb" stroke="#9ab4d8"/><path d="M0.500 11.500h14.500M14.500 5v6.500" stroke="#3c5a82" fill="none"/><text x="1.800" y="10.300" font-family="Liberation Mono,monospace" font-size="6.500" font-weight="bold" fill="#50586a" textLength="11" lengthAdjust="spacingAndGlyphs">Abc</text></svg>
<div class="t " style="left:1124px;top:233px;">Page</div>
<div class="a" style="left:1094px;top:240px;width:10px;height:1px;background-image:linear-gradient(90deg,#8c8c8c 50%,transparent 50%);background-size:2px 1px"></div>
<svg style="left:1104px;top:248px" width="15" height="16" viewBox="0 0 15 16"><rect x="0.500" y="4.500" width="14" height="7" fill="#f2f5fb" stroke="#9ab4d8"/><path d="M0.500 11.500h14.500M14.500 5v6.500" stroke="#3c5a82" fill="none"/><text x="1.800" y="10.300" font-family="Liberation Mono,monospace" font-size="6.500" font-weight="bold" fill="#50586a" textLength="11" lengthAdjust="spacingAndGlyphs">Abc</text></svg>
<div class="t " style="left:1124px;top:249px;">Page#</div>
<div class="a" style="left:1094px;top:256px;width:10px;height:1px;background-image:linear-gradient(90deg,#8c8c8c 50%,transparent 50%);background-size:2px 1px"></div>
<svg style="left:1104px;top:264px" width="15" height="16" viewBox="0 0 15 16"><rect x="0.500" y="4.500" width="14" height="7" fill="#f2f5fb" stroke="#9ab4d8"/><path d="M0.500 11.500h14.500M14.500 5v6.500" stroke="#3c5a82" fill="none"/><text x="1.800" y="10.300" font-family="Liberation Mono,monospace" font-size="6.500" font-weight="bold" fill="#50586a" textLength="11" lengthAdjust="spacingAndGlyphs">Abc</text></svg>
<div class="t " style="left:1124px;top:265px;">TotalPages</div>
<div class="a" style="left:1094px;top:272px;width:10px;height:1px;background-image:linear-gradient(90deg,#8c8c8c 50%,transparent 50%);background-size:2px 1px"></div>
<svg style="left:1104px;top:280px" width="15" height="16" viewBox="0 0 15 16"><rect x="0.500" y="4.500" width="14" height="7" fill="#f2f5fb" stroke="#9ab4d8"/><path d="M0.500 11.500h14.500M14.500 5v6.500" stroke="#3c5a82" fill="none"/><text x="1.800" y="10.300" font-family="Liberation Mono,monospace" font-size="6.500" font-weight="bold" fill="#50586a" textLength="11" lengthAdjust="spacingAndGlyphs">Abc</text></svg>
<div class="t " style="left:1124px;top:281px;">TotalPages#</div>
<div class="a" style="left:1094px;top:288px;width:10px;height:1px;background-image:linear-gradient(90deg,#8c8c8c 50%,transparent 50%);background-size:2px 1px"></div>
<svg style="left:1104px;top:296px" width="15" height="16" viewBox="0 0 15 16"><rect x="0.500" y="4.500" width="14" height="7" fill="#f2f5fb" stroke="#9ab4d8"/><path d="M0.500 11.500h14.500M14.500 5v6.500" stroke="#3c5a82" fill="none"/><text x="1.800" y="10.300" font-family="Liberation Mono,monospace" font-size="6.500" font-weight="bold" fill="#50586a" textLength="11" lengthAdjust="spacingAndGlyphs">Abc</text></svg>
<div class="t " style="left:1124px;top:297px;">Line</div>
<div class="a" style="left:1094px;top:304px;width:10px;height:1px;background-image:linear-gradient(90deg,#8c8c8c 50%,transparent 50%);background-size:2px 1px"></div>
<svg style="left:1104px;top:312px" width="15" height="16" viewBox="0 0 15 16"><rect x="0.500" y="4.500" width="14" height="7" fill="#f2f5fb" stroke="#9ab4d8"/><path d="M0.500 11.500h14.500M14.500 5v6.500" stroke="#3c5a82" fill="none"/><text x="1.800" y="10.300" font-family="Liberation Mono,monospace" font-size="6.500" font-weight="bold" fill="#50586a" textLength="11" lengthAdjust="spacingAndGlyphs">Abc</text></svg>
<div class="t " style="left:1124px;top:313px;">Line#</div>
<div class="a" style="left:1094px;top:320px;width:10px;height:1px;background-image:linear-gradient(90deg,#8c8c8c 50%,transparent 50%);background-size:2px 1px"></div>
<svg style="left:1104px;top:328px" width="15" height="16" viewBox="0 0 15 16"><rect x="0.500" y="4.500" width="14" height="7" fill="#f2f5fb" stroke="#9ab4d8"/><path d="M0.500 11.500h14.500M14.500 5v6.500" stroke="#3c5a82" fill="none"/><text x="1.800" y="10.300" font-family="Liberation Mono,monospace" font-size="6.500" font-weight="bold" fill="#50586a" textLength="11" lengthAdjust="spacingAndGlyphs">Abc</text></svg>
<div class="t " style="left:1124px;top:329px;">CopyName#</div>
<div class="a" style="left:1094px;top:336px;width:10px;height:1px;background-image:linear-gradient(90deg,#8c8c8c 50%,transparent 50%);background-size:2px 1px"></div>
<svg style="left:1104px;top:344px" width="15" height="16" viewBox="0 0 15 16"><rect x="0.500" y="4.500" width="14" height="7" fill="#f2f5fb" stroke="#9ab4d8"/><path d="M0.500 11.500h14.500M14.500 5v6.500" stroke="#3c5a82" fill="none"/><text x="1.800" y="10.300" font-family="Liberation Mono,monospace" font-size="6.500" font-weight="bold" fill="#50586a" textLength="11" lengthAdjust="spacingAndGlyphs">Abc</text></svg>
<div class="t " style="left:1124px;top:345px;">TableRow</div>
<div class="a" style="left:1094px;top:352px;width:10px;height:1px;background-image:linear-gradient(90deg,#8c8c8c 50%,transparent 50%);background-size:2px 1px"></div>
<svg style="left:1104px;top:360px" width="15" height="16" viewBox="0 0 15 16"><rect x="0.500" y="4.500" width="14" height="7" fill="#f2f5fb" stroke="#9ab4d8"/><path d="M0.500 11.500h14.500M14.500 5v6.500" stroke="#3c5a82" fill="none"/><text x="1.800" y="10.300" font-family="Liberation Mono,monospace" font-size="6.500" font-weight="bold" fill="#50586a" textLength="11" lengthAdjust="spacingAndGlyphs">Abc</text></svg>
<div class="t " style="left:1124px;top:361px;">TableColumn</div>
<div class="a" style="left:1094px;top:368px;width:10px;height:1px;background-image:linear-gradient(90deg,#8c8c8c 50%,transparent 50%);background-size:2px 1px"></div>
<div class="a" style="left:1093px;top:200px;width:1px;height:169px;background-image:linear-gradient(180deg,#8c8c8c 50%,transparent 50%);background-size:1px 2px"></div>
<div class="a" style="left:1074px;top:168px;width:1px;height:16px;background-image:linear-gradient(180deg,#8c8c8c 50%,transparent 50%);background-size:1px 2px"></div>
<div class="a" style="left:1074px;top:176px;width:10px;height:1px;background-image:linear-gradient(90deg,#8c8c8c 50%,transparent 50%);background-size:2px 1px"></div>
<div class="a" style="left:1081px;top:192px;width:4px;height:1px;background-image:linear-gradient(90deg,#8c8c8c 50%,transparent 50%);background-size:2px 1px"></div>
<svg style="left:1390px;top:157px" width="12" height="10" viewBox="0 0 12 10"><path d="M1 1l4 4l-4 4M6 1l4 4l-4 4" fill="none" stroke="#b0b0b0" stroke-width="1.800"/></svg>
<div class="a" style="left:0px;top:987px;width:1412px;height:21px;background:#f0f0f0;border-top:1px solid #d0d0d0"></div>
<div class="t b" style="left:2px;top:991.5px;letter-spacing:-0.4px;font-size:11px">Zentimeter</div>
<div class="a" style="left:76px;top:990px;width:1px;height:17px;background:#d0d0d0"></div>
<svg style="left:81px;top:990px" width="14" height="16" viewBox="0 0 14 16"><path d="M3.500 0v15M0 3.500h9" stroke="#555" stroke-dasharray="1 1"/><rect x="7.500" y="6.500" width="6" height="6" fill="#a8c8f4" stroke="#6a9ae0"/></svg>
<div class="t " style="left:97px;top:991px;letter-spacing:0.1px">7,04; 21,09</div>
<div class="a" style="left:304px;top:990px;width:1px;height:17px;background:#d0d0d0"></div>
<div class="t b" style="left:309px;top:991.5px;letter-spacing:-0.3px;font-size:11px">Page1</div>
<div class="a" style="left:0px;top:0px;width:1px;height:1008px;background:#4f4f4f"></div>
<div class="a" style="left:1411px;top:0px;width:1px;height:109px;background:#4a4a4a"></div>
<div class="a" style="left:1410px;top:117px;width:1px;height:891px;background:#666"></div>
<div class="a" style="left:1411px;top:109px;width:1px;height:899px;background:#fafafa"></div>
</body></html>
